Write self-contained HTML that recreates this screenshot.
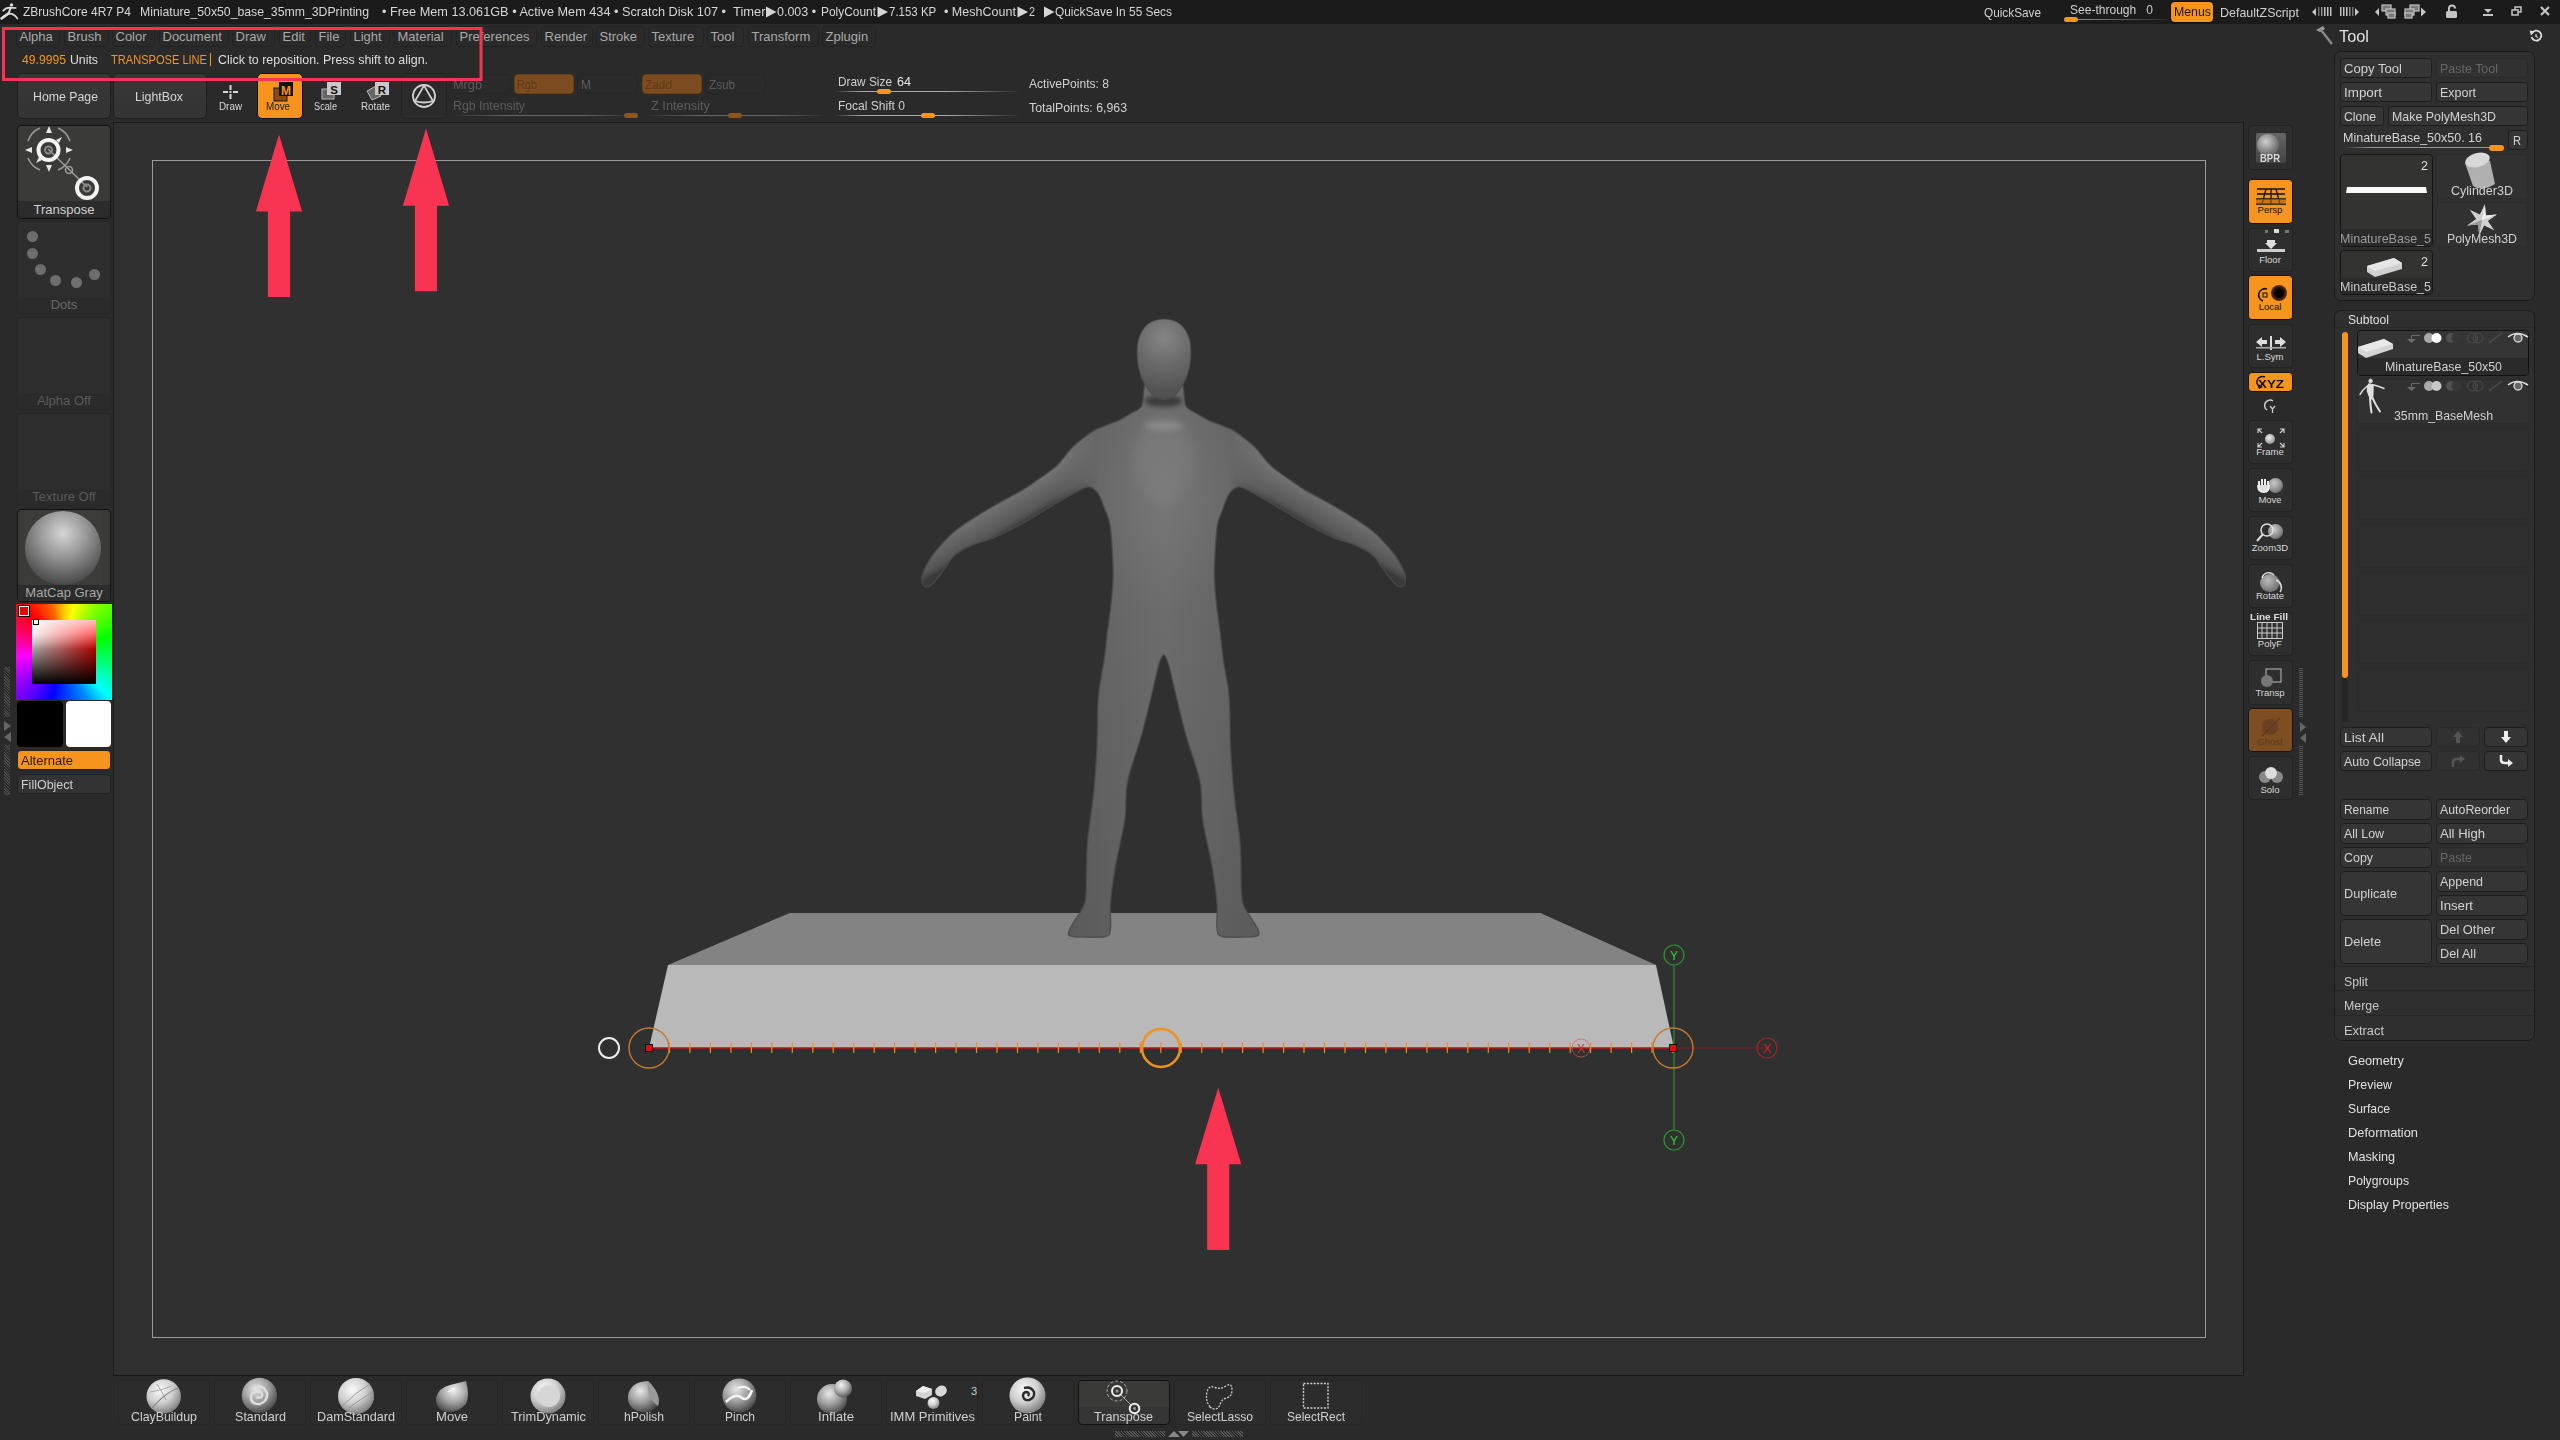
<!DOCTYPE html>
<html><head><meta charset="utf-8"><style>
html,body{margin:0;padding:0;}
body{width:2560px;height:1440px;overflow:hidden;position:relative;background:#2a2a2a;font-family:"Liberation Sans", sans-serif;}
.t{position:absolute;white-space:nowrap;line-height:1;}
</style></head><body>

<div style="position:absolute;left:0px;top:0px;width:2560px;height:24px;background:#1b1b1b;"></div>
<svg style="position:absolute;left:0;top:0" width="20" height="22" viewBox="0 0 20 22"><g fill="none" stroke="#dcdcdc" stroke-linecap="round"><path d="M3.2,10.6 Q6,7.6 9,7.6 L15.8,8" stroke-width="1.6"/><path d="M10.5,8 L8.6,13.4" stroke-width="2"/><path d="M8.6,13.4 L1.6,18.4" stroke-width="2.6"/><path d="M8.6,13.6 Q14,13.2 17.4,18.6" stroke-width="1.7"/></g><circle cx="11.5" cy="4.9" r="1.7" fill="#dcdcdc"/></svg>
<div class="t" style="left:23px;top:4.99px;font-size:13px;color:#d6d6d6;transform:scaleX(0.9226);transform-origin:0 0;">ZBrushCore 4R7 P4</div>
<div class="t" style="left:140px;top:4.99px;font-size:13px;color:#d6d6d6;transform:scaleX(0.9431);transform-origin:0 0;">Miniature_50x50_base_35mm_3DPrinting</div>
<div class="t" style="left:382px;top:4.99px;font-size:13px;color:#d6d6d6;transform:scaleX(0.9772);transform-origin:0 0;">&bull; Free Mem 13.061GB &bull; Active Mem 434 &bull; Scratch Disk 107 &bull;</div>
<div class="t" style="left:732.5px;top:4.99px;font-size:13px;color:#d6d6d6;transform:scaleX(0.9928);transform-origin:0 0;">Timer</div>
<div class="t" style="left:777px;top:4.99px;font-size:13px;color:#d6d6d6;transform:scaleX(0.9583);transform-origin:0 0;">0.003 &bull;</div>
<div class="t" style="left:821px;top:4.99px;font-size:13px;color:#d6d6d6;transform:scaleX(0.9170);transform-origin:0 0;">PolyCount</div>
<div class="t" style="left:888.75px;top:4.99px;font-size:13px;color:#d6d6d6;transform:scaleX(0.8834);transform-origin:0 0;">7.153 KP</div>
<div class="t" style="left:944px;top:4.99px;font-size:13px;color:#d6d6d6;transform:scaleX(0.9646);transform-origin:0 0;">&bull; MeshCount</div>
<div class="t" style="left:1029px;top:4.99px;font-size:13px;color:#d6d6d6;transform:scaleX(0.8298);transform-origin:0 0;">2</div>
<div class="t" style="left:1054.5px;top:4.99px;font-size:13px;color:#d6d6d6;transform:scaleX(0.9148);transform-origin:0 0;">QuickSave In 55 Secs</div>
<svg style="position:absolute;left:760px;top:0" width="300" height="24" viewBox="760 0 300 24"><g fill="#d6d6d6"><polygon points="766,6.5 776.5,12 766,17.5"/><polygon points="877.5,6.5 888,12 877.5,17.5"/><polygon points="1017.5,6.5 1028,12 1017.5,17.5"/><polygon points="1044,6.5 1054.5,12 1044,17.5"/></g></svg>
<div class="t" style="left:1984px;top:5.99px;font-size:13px;color:#d0d0d0;transform:scaleX(0.9067);transform-origin:0 0;">QuickSave</div>
<div class="t" style="left:2070px;top:2.99px;font-size:13px;color:#d0d0d0;transform:scaleX(0.9261);transform-origin:0 0;">See-through&nbsp;&nbsp; 0</div>
<div style="position:absolute;left:2065px;top:19px;width:103px;height:1px;background:linear-gradient(90deg,#999,#2a2a2a);"></div>
<div style="position:absolute;left:2064px;top:17px;width:14px;height:5px;background:#f7941e;border-radius:3px;"></div>
<div style="position:absolute;left:2171px;top:2px;width:42px;height:20px;background:#f7941e;border-radius:4px;box-shadow:0 0 0 1px #111;"></div>
<div class="t" style="left:2174px;top:5.49px;font-size:13px;color:#1a1a1a;transform:scaleX(0.9482);transform-origin:0 0;">Menus</div>
<div class="t" style="left:2219.5px;top:5.99px;font-size:13px;color:#d0d0d0;transform:scaleX(0.9592);transform-origin:0 0;">DefaultZScript</div>
<svg style="position:absolute;left:2300px;top:0px" width="260" height="24" viewBox="0 0 260 24">
<g fill="#c4c4c4">
<polygon points="12,12 16,8 16,16"/>
<rect x="18" y="7" width="1.5" height="9" opacity="0.5"/><rect x="21" y="7" width="1.5" height="9" opacity="0.7"/><rect x="24" y="7" width="1.5" height="9"/><rect x="27" y="7" width="1.5" height="9"/><rect x="30" y="7" width="1.5" height="9"/>
<rect x="40" y="7" width="1.5" height="9"/><rect x="43" y="7" width="1.5" height="9"/><rect x="46" y="7" width="1.5" height="9"/><rect x="49" y="7" width="1.5" height="9" opacity="0.7"/><rect x="52" y="7" width="1.5" height="9" opacity="0.5"/>
<polygon points="59,12 55,8 55,16"/>
<polygon points="75,12 79,8 79,16"/>
<polygon points="126,12 121,7.5 121,16.5"/>
</g>
<g fill="#777" stroke="#c4c4c4" stroke-width="1.2">
<rect x="82" y="5" width="9" height="6"/><rect x="86" y="9" width="9" height="6"/><rect x="88" y="13" width="7" height="5"/>
<rect x="110" y="5" width="9" height="6"/><rect x="105" y="9" width="9" height="6"/><rect x="105" y="13" width="7" height="5"/>
</g>
<g fill="#c4c4c4">
<rect x="146" y="11" width="11" height="7" rx="1.5"/>
</g>
<path d="M149,11 V8.5 a3,3 0 0 1 6,0" stroke="#c4c4c4" stroke-width="2" fill="none"/>
<g fill="#c4c4c4"><polygon points="184,9 192,9 188,13"/><rect x="183" y="14" width="10" height="2"/></g>
<g fill="none" stroke="#c4c4c4" stroke-width="1.5"><rect x="212" y="10" width="6" height="5"/><path d="M215,10 V7 H221 V12 H218"/></g>
<path d="M241,7 L249,15 M249,7 L241,15" stroke="#c4c4c4" stroke-width="2.2"/>
</svg>
<div style="position:absolute;left:16px;top:26px;width:44px;height:21px;box-sizing:border-box;border:1px solid #232323;border-radius:4px;background:#2a2a2a;"></div>
<div class="t" style="left:19.5px;top:29.99px;font-size:13px;color:#a9a9a9;">Alpha</div>
<div style="position:absolute;left:64px;top:26px;width:45px;height:21px;box-sizing:border-box;border:1px solid #232323;border-radius:4px;background:#2a2a2a;"></div>
<div class="t" style="left:67.5px;top:29.99px;font-size:13px;color:#a9a9a9;">Brush</div>
<div style="position:absolute;left:112px;top:26px;width:43px;height:21px;box-sizing:border-box;border:1px solid #232323;border-radius:4px;background:#2a2a2a;"></div>
<div class="t" style="left:115.5px;top:29.99px;font-size:13px;color:#a9a9a9;">Color</div>
<div style="position:absolute;left:159px;top:26px;width:70px;height:21px;box-sizing:border-box;border:1px solid #232323;border-radius:4px;background:#2a2a2a;"></div>
<div class="t" style="left:162.5px;top:29.99px;font-size:13px;color:#a9a9a9;">Document</div>
<div style="position:absolute;left:232px;top:26px;width:43px;height:21px;box-sizing:border-box;border:1px solid #232323;border-radius:4px;background:#2a2a2a;"></div>
<div class="t" style="left:235.5px;top:29.99px;font-size:13px;color:#a9a9a9;">Draw</div>
<div style="position:absolute;left:279px;top:26px;width:32px;height:21px;box-sizing:border-box;border:1px solid #232323;border-radius:4px;background:#2a2a2a;"></div>
<div class="t" style="left:282.5px;top:29.99px;font-size:13px;color:#a9a9a9;">Edit</div>
<div style="position:absolute;left:315px;top:26px;width:31px;height:21px;box-sizing:border-box;border:1px solid #232323;border-radius:4px;background:#2a2a2a;"></div>
<div class="t" style="left:318.5px;top:29.99px;font-size:13px;color:#a9a9a9;">File</div>
<div style="position:absolute;left:350px;top:26px;width:40px;height:21px;box-sizing:border-box;border:1px solid #232323;border-radius:4px;background:#2a2a2a;"></div>
<div class="t" style="left:353.5px;top:29.99px;font-size:13px;color:#a9a9a9;">Light</div>
<div style="position:absolute;left:394px;top:26px;width:58px;height:21px;box-sizing:border-box;border:1px solid #232323;border-radius:4px;background:#2a2a2a;"></div>
<div class="t" style="left:397.5px;top:29.99px;font-size:13px;color:#a9a9a9;">Material</div>
<div style="position:absolute;left:456px;top:26px;width:81px;height:21px;box-sizing:border-box;border:1px solid #232323;border-radius:4px;background:#2a2a2a;"></div>
<div class="t" style="left:459.5px;top:29.99px;font-size:13px;color:#a9a9a9;">Preferences</div>
<div style="position:absolute;left:541px;top:26px;width:52px;height:21px;box-sizing:border-box;border:1px solid #232323;border-radius:4px;background:#2a2a2a;"></div>
<div class="t" style="left:544.5px;top:29.99px;font-size:13px;color:#a9a9a9;">Render</div>
<div style="position:absolute;left:596px;top:26px;width:49px;height:21px;box-sizing:border-box;border:1px solid #232323;border-radius:4px;background:#2a2a2a;"></div>
<div class="t" style="left:599.5px;top:29.99px;font-size:13px;color:#a9a9a9;">Stroke</div>
<div style="position:absolute;left:648px;top:26px;width:56px;height:21px;box-sizing:border-box;border:1px solid #232323;border-radius:4px;background:#2a2a2a;"></div>
<div class="t" style="left:651.5px;top:29.99px;font-size:13px;color:#a9a9a9;">Texture</div>
<div style="position:absolute;left:707px;top:26px;width:37px;height:21px;box-sizing:border-box;border:1px solid #232323;border-radius:4px;background:#2a2a2a;"></div>
<div class="t" style="left:710.5px;top:29.99px;font-size:13px;color:#a9a9a9;">Tool</div>
<div style="position:absolute;left:748px;top:26px;width:71px;height:21px;box-sizing:border-box;border:1px solid #232323;border-radius:4px;background:#2a2a2a;"></div>
<div class="t" style="left:751.5px;top:29.99px;font-size:13px;color:#a9a9a9;">Transform</div>
<div style="position:absolute;left:822px;top:26px;width:54px;height:21px;box-sizing:border-box;border:1px solid #232323;border-radius:4px;background:#2a2a2a;"></div>
<div class="t" style="left:825.5px;top:29.99px;font-size:13px;color:#a9a9a9;">Zplugin</div>
<div class="t" style="left:22px;top:53.49px;font-size:13px;color:#f7941e;transform:scaleX(0.9363);transform-origin:0 0;">49.9995</div>
<div class="t" style="left:70px;top:53.49px;font-size:13px;color:#dedede;transform:scaleX(0.9453);transform-origin:0 0;">Units</div>
<div class="t" style="left:111px;top:53.49px;font-size:13px;color:#f7941e;transform:scaleX(0.8518);transform-origin:0 0;">TRANSPOSE LINE</div>
<div style="position:absolute;left:210px;top:53px;width:1px;height:13px;background:#f7941e;"></div>
<div class="t" style="left:218px;top:53.49px;font-size:13px;color:#dedede;transform:scaleX(0.9561);transform-origin:0 0;">Click to reposition. Press shift to align.</div>
<div style="position:absolute;left:17px;top:73px;width:94px;height:46px;box-sizing:border-box;background:linear-gradient(#383838,#333);border:1px solid #1f1f1f;border-radius:5px;"></div>
<div class="t" style="left:33px;top:89.99px;font-size:13px;color:#d6d6d6;transform:scaleX(0.9468);transform-origin:0 0;">Home Page</div>
<div style="position:absolute;left:113px;top:73px;width:94px;height:46px;box-sizing:border-box;background:linear-gradient(#383838,#333);border:1px solid #1f1f1f;border-radius:5px;"></div>
<div class="t" style="left:135px;top:89.99px;font-size:13px;color:#d6d6d6;transform:scaleX(0.9488);transform-origin:0 0;">LightBox</div>
<div style="position:absolute;left:257px;top:73px;width:46px;height:46px;box-sizing:border-box;background:#f7941e;border:1px solid #111;border-radius:5px;"></div>
<div style="position:absolute;left:401px;top:73px;width:46px;height:46px;box-sizing:border-box;background:#2a2a2a;border:1px solid #222;border-radius:5px;"></div>
<svg style="position:absolute;left:210px;top:75px" width="240" height="45" viewBox="210 75 240 45">
<g fill="#d8d8d8">
<rect x="229.5" y="85" width="2" height="5"/><rect x="229.5" y="94" width="2" height="5"/>
<rect x="223" y="91" width="5" height="2"/><rect x="233" y="91" width="5" height="2"/><rect x="229.5" y="91" width="2" height="2"/>
</g>
<rect x="274" y="88" width="13" height="13" fill="#8a4a10" stroke="#1a1a1a" stroke-width="1"/>
<rect x="279" y="82" width="14" height="14" fill="#111"/>
<text x="286" y="94.5" font-family="Liberation Sans" font-weight="bold" font-size="12" fill="#f7941e" text-anchor="middle">M</text>
<rect x="322" y="89" width="12" height="10" fill="#666" stroke="#bbb" stroke-width="1"/>
<rect x="327" y="82" width="14" height="13" fill="#c8c8c8"/>
<text x="334" y="93.5" font-family="Liberation Sans" font-weight="bold" font-size="11.5" fill="#111" text-anchor="middle">S</text>
<polygon points="367,91 376,86 381,96 372,100" fill="#666" stroke="#bbb" stroke-width="1"/>
<rect x="375" y="82" width="14" height="13" fill="#c8c8c8"/>
<text x="382" y="93.5" font-family="Liberation Sans" font-weight="bold" font-size="11.5" fill="#111" text-anchor="middle">R</text>
<g fill="none" stroke="#cfcfcf" stroke-width="1.8">
<circle cx="424" cy="96" r="11"/>
<path d="M415,101 Q424,86 424,85 Q424,86 433,101 Q424,104 415,101 Z"/>
</g>
</svg>
<div class="t" style="left:219.0px;top:101.53px;font-size:10px;color:#d8d8d8;transform:scaleX(0.9856);transform-origin:0 0;">Draw</div>
<div class="t" style="left:266.0px;top:101.53px;font-size:10px;color:#1a1a1a;transform:scaleX(0.9814);transform-origin:0 0;">Move</div>
<div class="t" style="left:313.5px;top:101.53px;font-size:10px;color:#d8d8d8;transform:scaleX(0.9194);transform-origin:0 0;">Scale</div>
<div class="t" style="left:361.0px;top:101.53px;font-size:10px;color:#d8d8d8;transform:scaleX(0.9843);transform-origin:0 0;">Rotate</div>
<div style="position:absolute;left:450px;top:74px;width:61px;height:20px;box-sizing:border-box;background:#2a2a2a;border:1px solid #262626;border-radius:4px;"></div>
<div class="t" style="left:453px;top:77.99px;font-size:13px;color:#5c5c5c;transform:scaleX(0.9791);transform-origin:0 0;">Mrgb</div>
<div style="position:absolute;left:514px;top:74px;width:60px;height:20px;box-sizing:border-box;background:#7b4c1f;border:1px solid #6a3f15;border-radius:4px;"></div>
<div class="t" style="left:517px;top:77.99px;font-size:13px;color:#5f3a14;transform:scaleX(0.8386);transform-origin:0 0;">Rgb</div>
<div style="position:absolute;left:577px;top:74px;width:61px;height:20px;box-sizing:border-box;background:#2a2a2a;border:1px solid #262626;border-radius:4px;"></div>
<div class="t" style="left:581px;top:77.99px;font-size:13px;color:#5c5c5c;transform:scaleX(0.9234);transform-origin:0 0;">M</div>
<div style="position:absolute;left:642px;top:74px;width:60px;height:20px;box-sizing:border-box;background:#7b4c1f;border:1px solid #6a3f15;border-radius:4px;"></div>
<div class="t" style="left:645px;top:77.99px;font-size:13px;color:#5f3a14;transform:scaleX(0.9112);transform-origin:0 0;">Zadd</div>
<div style="position:absolute;left:705px;top:74px;width:61px;height:20px;box-sizing:border-box;background:#2a2a2a;border:1px solid #262626;border-radius:4px;"></div>
<div class="t" style="left:709px;top:77.99px;font-size:13px;color:#5c5c5c;transform:scaleX(0.8996);transform-origin:0 0;">Zsub</div>
<div class="t" style="left:453px;top:98.99px;font-size:13px;color:#5c5c5c;transform:scaleX(0.9489);transform-origin:0 0;">Rgb Intensity</div>
<div class="t" style="left:651px;top:98.99px;font-size:13px;color:#5c5c5c;transform:scaleX(0.9839);transform-origin:0 0;">Z Intensity</div>
<div style="position:absolute;left:450px;top:115px;width:190px;height:1px;background:linear-gradient(90deg,#2a2a2a,#666 30%,#666 70%,#2a2a2a);"></div>
<div style="position:absolute;left:624px;top:112.5px;width:14px;height:5px;background:#8a5520;border-radius:3px;"></div>
<div style="position:absolute;left:644px;top:115px;width:186px;height:1px;background:linear-gradient(90deg,#2a2a2a,#666 30%,#666 70%,#2a2a2a);"></div>
<div style="position:absolute;left:728px;top:112.5px;width:14px;height:5px;background:#8a5520;border-radius:3px;"></div>
<div class="t" style="left:837.5px;top:75.49px;font-size:13px;color:#cfcfcf;transform:scaleX(0.9116);transform-origin:0 0;">Draw Size</div>
<div class="t" style="left:897px;top:75.49px;font-size:13px;color:#e6e6e6;transform:scaleX(0.9682);transform-origin:0 0;">64</div>
<div style="position:absolute;left:835px;top:91px;width:186px;height:1px;background:linear-gradient(90deg,#2a2a2a,#aaa 15%,#aaa 60%,#2a2a2a);"></div>
<div style="position:absolute;left:877px;top:88.5px;width:14px;height:5.5px;background:#f7941e;border-radius:3px;"></div>
<div class="t" style="left:837.5px;top:98.99px;font-size:13px;color:#cfcfcf;transform:scaleX(0.9273);transform-origin:0 0;">Focal Shift 0</div>
<div style="position:absolute;left:835px;top:115px;width:186px;height:1px;background:linear-gradient(90deg,#2a2a2a,#aaa 15%,#aaa 60%,#2a2a2a);"></div>
<div style="position:absolute;left:921px;top:112.5px;width:14px;height:5.5px;background:#f7941e;border-radius:3px;"></div>
<div class="t" style="left:1029px;top:77.49px;font-size:13px;color:#d0d0d0;transform:scaleX(0.9304);transform-origin:0 0;">ActivePoints: 8</div>
<div class="t" style="left:1029px;top:101.49px;font-size:13px;color:#d0d0d0;transform:scaleX(0.9483);transform-origin:0 0;">TotalPoints: 6,963</div>
<div style="position:absolute;left:113px;top:122px;width:2131px;height:1254px;box-sizing:border-box;background:#303030;border-top:1px solid #1a1a1a;border-right:1px solid #161616;border-bottom:1px solid #161616;border-left:1px solid #1e1e1e;"></div>
<div style="position:absolute;left:152px;top:160px;width:2054px;height:1178px;box-sizing:border-box;border:1px solid #9a9a9a;"></div>
<div style="position:absolute;left:17px;top:125px;width:94px;height:94px;box-sizing:border-box;background:#3a3a38;border:1px solid #111;border-radius:4px;overflow:hidden;"></div>
<div style="position:absolute;left:18px;top:201px;width:92px;height:17px;background:#2c2c2c;border-radius:0 0 3px 3px;"></div>
<div class="t" style="left:33.530234375px;top:202.99px;font-size:13px;color:#d0d0d0;">Transpose</div>
<div style="position:absolute;left:17px;top:221px;width:94px;height:93px;box-sizing:border-box;background:#2e2e2e;border:1px solid #262626;border-radius:4px;overflow:hidden;"></div>
<div style="position:absolute;left:18px;top:297px;width:92px;height:16px;background:#2b2b2b;border-radius:0 0 3px 3px;"></div>
<div class="t" style="left:50.6348828125px;top:297.99px;font-size:13px;color:#6a6a6a;">Dots</div>
<div style="position:absolute;left:17px;top:317px;width:94px;height:93px;box-sizing:border-box;background:#2e2e2e;border:1px solid #262626;border-radius:4px;overflow:hidden;"></div>
<div style="position:absolute;left:18px;top:393px;width:92px;height:16px;background:#2b2b2b;border-radius:0 0 3px 3px;"></div>
<div class="t" style="left:37.01890625px;top:393.99px;font-size:13px;color:#5a5a5a;">Alpha Off</div>
<div style="position:absolute;left:17px;top:413px;width:94px;height:93px;box-sizing:border-box;background:#2e2e2e;border:1px solid #262626;border-radius:4px;overflow:hidden;"></div>
<div style="position:absolute;left:18px;top:489px;width:92px;height:16px;background:#2b2b2b;border-radius:0 0 3px 3px;"></div>
<div class="t" style="left:32.328242187499995px;top:489.99px;font-size:13px;color:#5a5a5a;">Texture Off</div>
<div style="position:absolute;left:17px;top:509px;width:94px;height:93px;box-sizing:border-box;background:#393938;border:1px solid #111;border-radius:4px;overflow:hidden;"></div>
<div style="position:absolute;left:18px;top:585px;width:92px;height:16px;background:#2c2c2c;border-radius:0 0 3px 3px;"></div>
<div class="t" style="left:25.348359375px;top:585.99px;font-size:13px;color:#a8a8a8;">MatCap Gray</div>
<svg style="position:absolute;left:17px;top:125px" width="94" height="76" viewBox="17 125 94 76">
<g fill="none" stroke="#9a9a9a" stroke-width="1.6">
<path d="M28,141 A22,22 0 0 1 40,128"/><path d="M58,128 A22,22 0 0 1 70,141"/>
<path d="M28,158 A22,22 0 0 0 40,170"/><path d="M58,170 A22,22 0 0 0 70,158"/>
<path d="M48,149 L87,187"/>
<circle cx="69" cy="170" r="3.5"/>
</g>
<g fill="#e6e6e6"><polygon points="49,126 46,133 52,133"/><polygon points="49,172 46,165 52,165"/><polygon points="25,150 32,147 32,153"/><polygon points="73,150 66,147 66,153"/>
<polygon points="62,137 56,140 59,143"/><polygon points="36,163 39,157 42,160"/></g>
<circle cx="48.5" cy="150" r="10" fill="none" stroke="#f4f4f4" stroke-width="4"/>
<circle cx="48.5" cy="150" r="3.5" fill="none" stroke="#888" stroke-width="2"/>
<circle cx="87" cy="188" r="10" fill="none" stroke="#f4f4f4" stroke-width="4"/>
<circle cx="87" cy="188" r="3.5" fill="none" stroke="#888" stroke-width="2"/>
</svg>
<div style="position:absolute;left:26.5px;top:230.5px;width:11px;height:11px;background:#6e6e6e;border-radius:50%;"></div>
<div style="position:absolute;left:26.5px;top:247.5px;width:11px;height:11px;background:#6e6e6e;border-radius:50%;"></div>
<div style="position:absolute;left:34.5px;top:263.5px;width:11px;height:11px;background:#6e6e6e;border-radius:50%;"></div>
<div style="position:absolute;left:49.5px;top:274.5px;width:11px;height:11px;background:#6e6e6e;border-radius:50%;"></div>
<div style="position:absolute;left:70.5px;top:276.5px;width:11px;height:11px;background:#6e6e6e;border-radius:50%;"></div>
<div style="position:absolute;left:88.5px;top:268.5px;width:11px;height:11px;background:#6e6e6e;border-radius:50%;"></div>
<div style="position:absolute;left:24px;top:510px;width:79px;height:75px;background:#3c3c3a;"></div>
<div style="position:absolute;left:25px;top:511px;width:76px;height:74px;border-radius:50%;background:radial-gradient(circle at 50% 30%,#d6d6d6 0%,#9a9a9a 35%,#5a5a5a 70%,#2a2a2a 100%);"></div>
<div style="position:absolute;left:16px;top:604px;width:96px;height:96px;background:conic-gradient(from 0deg,#fc0 0deg,#ff0 12deg,#8f0 35deg,#0f0 70deg,#0f8 110deg,#0ff 135deg,#08f 155deg,#00f 195deg,#60f 220deg,#a0f 240deg,#f0f 265deg,#f06 295deg,#f00 320deg,#f60 345deg,#fc0 360deg);"></div>
<div style="position:absolute;left:32px;top:620px;width:64px;height:64px;background:linear-gradient(to bottom,rgba(255,255,255,0.75) 0%,rgba(255,255,255,0) 45%),linear-gradient(to bottom,rgba(0,0,0,0) 20%,#000 100%),linear-gradient(to right,#eee,#f00);"></div>
<div style="position:absolute;left:19px;top:606px;width:10px;height:10px;box-sizing:border-box;background:#e00;border:1.5px solid #fff;outline:1px solid #000;"></div>
<div style="position:absolute;left:33px;top:619px;width:6px;height:6px;box-sizing:border-box;background:#fff;border:1px solid #000;"></div>
<div style="position:absolute;left:17px;top:701px;width:46px;height:46px;background:#000;border-radius:4px;"></div>
<div style="position:absolute;left:66px;top:701px;width:45px;height:46px;background:#fff;border-radius:4px;"></div>
<div style="position:absolute;left:17px;top:750px;width:94px;height:20px;box-sizing:border-box;background:#f7941e;border:1px solid #222;border-radius:4px;"></div>
<div class="t" style="left:21px;top:753.99px;font-size:13px;color:#1a1a1a;transform:scaleX(0.9994);transform-origin:0 0;">Alternate</div>
<div style="position:absolute;left:17px;top:774px;width:94px;height:20px;box-sizing:border-box;background:#333;border:1px solid #222;border-radius:4px;"></div>
<div class="t" style="left:21px;top:777.99px;font-size:13px;color:#d0d0d0;transform:scaleX(0.9598);transform-origin:0 0;">FillObject</div>
<div style="position:absolute;left:4px;top:667px;width:6px;height:50px;background:repeating-linear-gradient(45deg,#4a4a4a 0 1px,#2a2a2a 1px 2px);"></div>
<div style="position:absolute;left:4px;top:745px;width:6px;height:50px;background:repeating-linear-gradient(45deg,#4a4a4a 0 1px,#2a2a2a 1px 2px);"></div>
<svg style="position:absolute;left:3px;top:720px" width="10" height="24"><polygon points="1,1 8,6 1,11" fill="#666"/><polygon points="8,12 1,17 8,22" fill="#666"/></svg>
<svg style="position:absolute;left:0;top:0" width="2560" height="1440" viewBox="0 0 2560 1440">
<defs>
<linearGradient id="topf" x1="0" y1="0" x2="0" y2="1"><stop offset="0" stop-color="#7c7c7c"/><stop offset="1" stop-color="#888"/></linearGradient>
<linearGradient id="frontf" x1="0" y1="0" x2="0" y2="1"><stop offset="0" stop-color="#bdbdbd"/><stop offset="1" stop-color="#b6b6b6"/></linearGradient>
<radialGradient id="body" cx="1163" cy="500" r="440" gradientUnits="userSpaceOnUse"><stop offset="0" stop-color="#777"/><stop offset="0.25" stop-color="#6c6c6c"/><stop offset="1" stop-color="#646464"/></radialGradient>
<linearGradient id="bodyh" x1="1040" y1="0" x2="1290" y2="0" gradientUnits="userSpaceOnUse"><stop offset="0" stop-color="#000" stop-opacity="0.25"/><stop offset="0.5" stop-color="#000" stop-opacity="0"/><stop offset="1" stop-color="#000" stop-opacity="0.25"/></linearGradient>
<radialGradient id="head" cx="1164" cy="338" r="60" gradientUnits="userSpaceOnUse"><stop offset="0" stop-color="#868686"/><stop offset="0.45" stop-color="#6a6a6a"/><stop offset="1" stop-color="#4e4e4e"/></radialGradient>
<filter id="blur6" x="-50%" y="-50%" width="200%" height="200%"><feGaussianBlur stdDeviation="6"/></filter>
<filter id="blur3" x="-50%" y="-50%" width="200%" height="200%"><feGaussianBlur stdDeviation="2.5"/></filter>
<clipPath id="bodyclip"><path d="M1163.8,378.0 C1161.0,378.0 1150.5,374.7 1147.0,378.0 C1143.5,381.3 1144.0,393.2 1143.0,398.0 C1142.0,402.8 1143.2,404.3 1141.0,407.0 C1138.8,409.7 1133.7,411.8 1130.0,414.0 C1126.3,416.2 1122.1,418.8 1118.8,420.4 C1115.4,422.0 1114.0,422.1 1110.0,423.8 C1106.0,425.4 1099.6,427.5 1095.0,430.0 C1090.4,432.5 1086.5,435.6 1082.5,438.8 C1078.5,441.9 1075.2,444.4 1071.0,448.8 C1066.8,453.1 1062.5,460.2 1057.5,465.0 C1052.5,469.8 1046.8,473.3 1041.0,477.5 C1035.2,481.7 1029.8,485.6 1022.5,490.0 C1015.2,494.4 1005.8,499.0 997.5,503.8 C989.2,508.5 979.6,514.2 972.5,518.8 C965.4,523.3 960.2,526.6 955.0,531.0 C949.8,535.4 945.0,540.6 941.0,545.0 C937.0,549.4 933.9,553.2 931.0,557.5 C928.1,561.8 925.2,567.1 923.8,571.0 C922.2,574.9 921.6,578.3 922.0,581.0 C922.4,583.7 924.2,586.5 926.0,587.0 C927.8,587.5 929.5,586.6 932.5,583.8 C935.5,580.9 940.2,574.6 943.8,570.0 C947.3,565.4 949.4,560.0 953.8,556.0 C958.1,552.0 963.8,548.9 970.0,546.0 C976.2,543.1 984.3,541.4 991.0,538.8 C997.7,536.1 1002.7,533.8 1010.0,530.0 C1017.3,526.2 1026.7,520.8 1035.0,516.0 C1043.3,511.2 1052.1,505.5 1060.0,501.0 C1067.9,496.5 1077.3,491.0 1082.5,488.8 C1087.7,486.5 1088.2,486.5 1091.0,487.5 C1093.8,488.5 1096.7,491.2 1099.0,495.0 C1101.3,498.8 1103.2,505.0 1105.0,510.0 C1106.8,515.0 1108.8,517.5 1110.0,525.0 C1111.2,532.5 1112.0,545.8 1112.5,555.0 C1113.0,564.2 1113.3,571.6 1113.0,580.0 C1112.7,588.4 1111.8,596.4 1110.8,605.6 C1109.8,614.8 1108.1,625.8 1107.0,635.0 C1105.9,644.2 1105.5,650.7 1104.0,661.0 C1102.5,671.3 1099.5,682.8 1098.3,697.0 C1097.1,711.2 1097.8,729.8 1097.0,746.0 C1096.2,762.2 1095.1,777.8 1093.5,794.0 C1091.9,810.2 1088.7,826.8 1087.4,843.0 C1086.2,859.2 1086.6,881.0 1086.0,891.5 C1085.4,902.0 1086.1,900.3 1083.7,906.0 C1081.3,911.7 1074.0,920.8 1071.6,925.6 C1069.1,930.4 1067.6,933.1 1069.0,935.0 C1070.4,936.9 1073.9,936.8 1080.0,937.0 C1086.1,937.2 1100.5,938.0 1105.6,936.5 C1110.7,935.0 1109.7,933.5 1110.5,928.0 C1111.3,922.5 1109.7,913.9 1110.5,903.7 C1111.3,893.5 1112.9,881.2 1115.3,867.0 C1117.7,852.8 1123.0,832.9 1125.0,818.7 C1127.0,804.5 1124.7,796.2 1127.5,782.0 C1130.3,767.8 1137.6,749.8 1142.0,733.6 C1146.4,717.4 1151.2,696.6 1154.0,685.0 C1156.8,673.4 1157.4,669.0 1159.0,664.0 C1160.6,659.0 1162.2,655.0 1163.8,655.0 C1165.3,655.0 1166.9,659.0 1168.5,664.0 C1170.1,669.0 1170.7,673.4 1173.5,685.0 C1176.3,696.6 1181.1,717.4 1185.5,733.6 C1189.9,749.8 1197.2,767.8 1200.0,782.0 C1202.8,796.2 1200.5,804.5 1202.5,818.7 C1204.5,832.9 1209.8,852.8 1212.2,867.0 C1214.6,881.2 1216.2,893.5 1217.0,903.7 C1217.8,913.9 1216.2,922.5 1217.0,928.0 C1217.8,933.5 1216.8,935.0 1221.9,936.5 C1227.0,938.0 1241.4,937.2 1247.5,937.0 C1253.6,936.8 1257.1,936.9 1258.5,935.0 C1259.9,933.1 1258.4,930.4 1255.9,925.6 C1253.5,920.8 1246.2,911.7 1243.8,906.0 C1241.4,900.3 1242.1,902.0 1241.5,891.5 C1240.9,881.0 1241.3,859.2 1240.1,843.0 C1238.8,826.8 1235.6,810.2 1234.0,794.0 C1232.4,777.8 1231.3,762.2 1230.5,746.0 C1229.7,729.8 1230.4,711.2 1229.2,697.0 C1228.0,682.8 1225.0,671.3 1223.5,661.0 C1222.0,650.7 1221.6,644.2 1220.5,635.0 C1219.4,625.8 1217.7,614.8 1216.7,605.6 C1215.7,596.4 1214.8,588.4 1214.5,580.0 C1214.2,571.6 1214.5,564.2 1215.0,555.0 C1215.5,545.8 1216.2,532.5 1217.5,525.0 C1218.8,517.5 1220.7,515.0 1222.5,510.0 C1224.3,505.0 1226.2,498.8 1228.5,495.0 C1230.8,491.2 1233.8,488.5 1236.5,487.5 C1239.2,486.5 1239.8,486.5 1245.0,488.8 C1250.2,491.0 1259.6,496.5 1267.5,501.0 C1275.4,505.5 1284.2,511.2 1292.5,516.0 C1300.8,520.8 1310.2,526.2 1317.5,530.0 C1324.8,533.8 1329.8,536.1 1336.5,538.8 C1343.2,541.4 1351.3,543.1 1357.5,546.0 C1363.7,548.9 1369.4,552.0 1373.8,556.0 C1378.1,560.0 1380.2,565.4 1383.8,570.0 C1387.3,574.6 1392.0,580.9 1395.0,583.8 C1398.0,586.6 1399.8,587.5 1401.5,587.0 C1403.2,586.5 1405.1,583.7 1405.5,581.0 C1405.9,578.3 1405.2,574.9 1403.8,571.0 C1402.2,567.1 1399.4,561.8 1396.5,557.5 C1393.6,553.2 1390.5,549.4 1386.5,545.0 C1382.5,540.6 1377.8,535.4 1372.5,531.0 C1367.2,526.6 1362.1,523.3 1355.0,518.8 C1347.9,514.2 1338.3,508.5 1330.0,503.8 C1321.7,499.0 1312.2,494.4 1305.0,490.0 C1297.8,485.6 1292.3,481.7 1286.5,477.5 C1280.7,473.3 1275.0,469.8 1270.0,465.0 C1265.0,460.2 1260.7,453.1 1256.5,448.8 C1252.3,444.4 1249.0,441.9 1245.0,438.8 C1241.0,435.6 1237.1,432.5 1232.5,430.0 C1227.9,427.5 1221.5,425.4 1217.5,423.8 C1213.5,422.1 1212.1,422.0 1208.8,420.4 C1205.4,418.8 1201.2,416.2 1197.5,414.0 C1193.8,411.8 1188.7,409.7 1186.5,407.0 C1184.3,404.3 1185.5,402.8 1184.5,398.0 C1183.5,393.2 1184.0,381.3 1180.5,378.0 C1177.0,374.7 1166.5,378.0 1163.8,378.0 C1161.0,378.0 1166.5,378.0 1163.8,378.0 Z"/></clipPath>
<linearGradient id="fadeL" x1="1050" y1="0" x2="1098" y2="0" gradientUnits="userSpaceOnUse"><stop offset="0" stop-color="#fff"/><stop offset="1" stop-color="#000"/></linearGradient>
<linearGradient id="fadeR" x1="1277.5" y1="0" x2="1229.5" y2="0" gradientUnits="userSpaceOnUse"><stop offset="0" stop-color="#fff"/><stop offset="1" stop-color="#000"/></linearGradient>
<mask id="mL" maskUnits="userSpaceOnUse" x="880" y="400" width="240" height="220"><rect x="880" y="400" width="240" height="220" fill="url(#fadeL)"/></mask>
<mask id="mR" maskUnits="userSpaceOnUse" x="1207.5" y="400" width="240" height="220"><rect x="1207.5" y="400" width="240" height="220" fill="url(#fadeR)"/></mask>
<linearGradient id="armL" x1="1000" y1="500" x2="1016" y2="527" gradientUnits="userSpaceOnUse"><stop offset="0" stop-color="#8a8a8a" stop-opacity="0.55"/><stop offset="0.45" stop-color="#777" stop-opacity="0.25"/><stop offset="0.75" stop-color="#444" stop-opacity="0.2"/><stop offset="1" stop-color="#2a2a2a" stop-opacity="0.7"/></linearGradient>
<linearGradient id="armR" x1="1327.5" y1="500" x2="1311.5" y2="527" gradientUnits="userSpaceOnUse"><stop offset="0" stop-color="#8a8a8a" stop-opacity="0.55"/><stop offset="0.45" stop-color="#777" stop-opacity="0.25"/><stop offset="0.75" stop-color="#444" stop-opacity="0.2"/><stop offset="1" stop-color="#2a2a2a" stop-opacity="0.7"/></linearGradient>
</defs>
<polygon points="789.7,913 1540.4,913 1656,965 668,965" fill="#838383"/>
<polygon points="668,965 1656,965 1674,1048 649,1048" fill="#b9b9b9"/>
<path d="M1163.8,378.0 C1161.0,378.0 1150.5,374.7 1147.0,378.0 C1143.5,381.3 1144.0,393.2 1143.0,398.0 C1142.0,402.8 1143.2,404.3 1141.0,407.0 C1138.8,409.7 1133.7,411.8 1130.0,414.0 C1126.3,416.2 1122.1,418.8 1118.8,420.4 C1115.4,422.0 1114.0,422.1 1110.0,423.8 C1106.0,425.4 1099.6,427.5 1095.0,430.0 C1090.4,432.5 1086.5,435.6 1082.5,438.8 C1078.5,441.9 1075.2,444.4 1071.0,448.8 C1066.8,453.1 1062.5,460.2 1057.5,465.0 C1052.5,469.8 1046.8,473.3 1041.0,477.5 C1035.2,481.7 1029.8,485.6 1022.5,490.0 C1015.2,494.4 1005.8,499.0 997.5,503.8 C989.2,508.5 979.6,514.2 972.5,518.8 C965.4,523.3 960.2,526.6 955.0,531.0 C949.8,535.4 945.0,540.6 941.0,545.0 C937.0,549.4 933.9,553.2 931.0,557.5 C928.1,561.8 925.2,567.1 923.8,571.0 C922.2,574.9 921.6,578.3 922.0,581.0 C922.4,583.7 924.2,586.5 926.0,587.0 C927.8,587.5 929.5,586.6 932.5,583.8 C935.5,580.9 940.2,574.6 943.8,570.0 C947.3,565.4 949.4,560.0 953.8,556.0 C958.1,552.0 963.8,548.9 970.0,546.0 C976.2,543.1 984.3,541.4 991.0,538.8 C997.7,536.1 1002.7,533.8 1010.0,530.0 C1017.3,526.2 1026.7,520.8 1035.0,516.0 C1043.3,511.2 1052.1,505.5 1060.0,501.0 C1067.9,496.5 1077.3,491.0 1082.5,488.8 C1087.7,486.5 1088.2,486.5 1091.0,487.5 C1093.8,488.5 1096.7,491.2 1099.0,495.0 C1101.3,498.8 1103.2,505.0 1105.0,510.0 C1106.8,515.0 1108.8,517.5 1110.0,525.0 C1111.2,532.5 1112.0,545.8 1112.5,555.0 C1113.0,564.2 1113.3,571.6 1113.0,580.0 C1112.7,588.4 1111.8,596.4 1110.8,605.6 C1109.8,614.8 1108.1,625.8 1107.0,635.0 C1105.9,644.2 1105.5,650.7 1104.0,661.0 C1102.5,671.3 1099.5,682.8 1098.3,697.0 C1097.1,711.2 1097.8,729.8 1097.0,746.0 C1096.2,762.2 1095.1,777.8 1093.5,794.0 C1091.9,810.2 1088.7,826.8 1087.4,843.0 C1086.2,859.2 1086.6,881.0 1086.0,891.5 C1085.4,902.0 1086.1,900.3 1083.7,906.0 C1081.3,911.7 1074.0,920.8 1071.6,925.6 C1069.1,930.4 1067.6,933.1 1069.0,935.0 C1070.4,936.9 1073.9,936.8 1080.0,937.0 C1086.1,937.2 1100.5,938.0 1105.6,936.5 C1110.7,935.0 1109.7,933.5 1110.5,928.0 C1111.3,922.5 1109.7,913.9 1110.5,903.7 C1111.3,893.5 1112.9,881.2 1115.3,867.0 C1117.7,852.8 1123.0,832.9 1125.0,818.7 C1127.0,804.5 1124.7,796.2 1127.5,782.0 C1130.3,767.8 1137.6,749.8 1142.0,733.6 C1146.4,717.4 1151.2,696.6 1154.0,685.0 C1156.8,673.4 1157.4,669.0 1159.0,664.0 C1160.6,659.0 1162.2,655.0 1163.8,655.0 C1165.3,655.0 1166.9,659.0 1168.5,664.0 C1170.1,669.0 1170.7,673.4 1173.5,685.0 C1176.3,696.6 1181.1,717.4 1185.5,733.6 C1189.9,749.8 1197.2,767.8 1200.0,782.0 C1202.8,796.2 1200.5,804.5 1202.5,818.7 C1204.5,832.9 1209.8,852.8 1212.2,867.0 C1214.6,881.2 1216.2,893.5 1217.0,903.7 C1217.8,913.9 1216.2,922.5 1217.0,928.0 C1217.8,933.5 1216.8,935.0 1221.9,936.5 C1227.0,938.0 1241.4,937.2 1247.5,937.0 C1253.6,936.8 1257.1,936.9 1258.5,935.0 C1259.9,933.1 1258.4,930.4 1255.9,925.6 C1253.5,920.8 1246.2,911.7 1243.8,906.0 C1241.4,900.3 1242.1,902.0 1241.5,891.5 C1240.9,881.0 1241.3,859.2 1240.1,843.0 C1238.8,826.8 1235.6,810.2 1234.0,794.0 C1232.4,777.8 1231.3,762.2 1230.5,746.0 C1229.7,729.8 1230.4,711.2 1229.2,697.0 C1228.0,682.8 1225.0,671.3 1223.5,661.0 C1222.0,650.7 1221.6,644.2 1220.5,635.0 C1219.4,625.8 1217.7,614.8 1216.7,605.6 C1215.7,596.4 1214.8,588.4 1214.5,580.0 C1214.2,571.6 1214.5,564.2 1215.0,555.0 C1215.5,545.8 1216.2,532.5 1217.5,525.0 C1218.8,517.5 1220.7,515.0 1222.5,510.0 C1224.3,505.0 1226.2,498.8 1228.5,495.0 C1230.8,491.2 1233.8,488.5 1236.5,487.5 C1239.2,486.5 1239.8,486.5 1245.0,488.8 C1250.2,491.0 1259.6,496.5 1267.5,501.0 C1275.4,505.5 1284.2,511.2 1292.5,516.0 C1300.8,520.8 1310.2,526.2 1317.5,530.0 C1324.8,533.8 1329.8,536.1 1336.5,538.8 C1343.2,541.4 1351.3,543.1 1357.5,546.0 C1363.7,548.9 1369.4,552.0 1373.8,556.0 C1378.1,560.0 1380.2,565.4 1383.8,570.0 C1387.3,574.6 1392.0,580.9 1395.0,583.8 C1398.0,586.6 1399.8,587.5 1401.5,587.0 C1403.2,586.5 1405.1,583.7 1405.5,581.0 C1405.9,578.3 1405.2,574.9 1403.8,571.0 C1402.2,567.1 1399.4,561.8 1396.5,557.5 C1393.6,553.2 1390.5,549.4 1386.5,545.0 C1382.5,540.6 1377.8,535.4 1372.5,531.0 C1367.2,526.6 1362.1,523.3 1355.0,518.8 C1347.9,514.2 1338.3,508.5 1330.0,503.8 C1321.7,499.0 1312.2,494.4 1305.0,490.0 C1297.8,485.6 1292.3,481.7 1286.5,477.5 C1280.7,473.3 1275.0,469.8 1270.0,465.0 C1265.0,460.2 1260.7,453.1 1256.5,448.8 C1252.3,444.4 1249.0,441.9 1245.0,438.8 C1241.0,435.6 1237.1,432.5 1232.5,430.0 C1227.9,427.5 1221.5,425.4 1217.5,423.8 C1213.5,422.1 1212.1,422.0 1208.8,420.4 C1205.4,418.8 1201.2,416.2 1197.5,414.0 C1193.8,411.8 1188.7,409.7 1186.5,407.0 C1184.3,404.3 1185.5,402.8 1184.5,398.0 C1183.5,393.2 1184.0,381.3 1180.5,378.0 C1177.0,374.7 1166.5,378.0 1163.8,378.0 C1161.0,378.0 1166.5,378.0 1163.8,378.0 Z" fill="url(#body)"/>
<path d="M1163.8,378.0 C1161.0,378.0 1150.5,374.7 1147.0,378.0 C1143.5,381.3 1144.0,393.2 1143.0,398.0 C1142.0,402.8 1143.2,404.3 1141.0,407.0 C1138.8,409.7 1133.7,411.8 1130.0,414.0 C1126.3,416.2 1122.1,418.8 1118.8,420.4 C1115.4,422.0 1114.0,422.1 1110.0,423.8 C1106.0,425.4 1099.6,427.5 1095.0,430.0 C1090.4,432.5 1086.5,435.6 1082.5,438.8 C1078.5,441.9 1075.2,444.4 1071.0,448.8 C1066.8,453.1 1062.5,460.2 1057.5,465.0 C1052.5,469.8 1046.8,473.3 1041.0,477.5 C1035.2,481.7 1029.8,485.6 1022.5,490.0 C1015.2,494.4 1005.8,499.0 997.5,503.8 C989.2,508.5 979.6,514.2 972.5,518.8 C965.4,523.3 960.2,526.6 955.0,531.0 C949.8,535.4 945.0,540.6 941.0,545.0 C937.0,549.4 933.9,553.2 931.0,557.5 C928.1,561.8 925.2,567.1 923.8,571.0 C922.2,574.9 921.6,578.3 922.0,581.0 C922.4,583.7 924.2,586.5 926.0,587.0 C927.8,587.5 929.5,586.6 932.5,583.8 C935.5,580.9 940.2,574.6 943.8,570.0 C947.3,565.4 949.4,560.0 953.8,556.0 C958.1,552.0 963.8,548.9 970.0,546.0 C976.2,543.1 984.3,541.4 991.0,538.8 C997.7,536.1 1002.7,533.8 1010.0,530.0 C1017.3,526.2 1026.7,520.8 1035.0,516.0 C1043.3,511.2 1052.1,505.5 1060.0,501.0 C1067.9,496.5 1077.3,491.0 1082.5,488.8 C1087.7,486.5 1088.2,486.5 1091.0,487.5 C1093.8,488.5 1096.7,491.2 1099.0,495.0 C1101.3,498.8 1103.2,505.0 1105.0,510.0 C1106.8,515.0 1108.8,517.5 1110.0,525.0 C1111.2,532.5 1112.0,545.8 1112.5,555.0 C1113.0,564.2 1113.3,571.6 1113.0,580.0 C1112.7,588.4 1111.8,596.4 1110.8,605.6 C1109.8,614.8 1108.1,625.8 1107.0,635.0 C1105.9,644.2 1105.5,650.7 1104.0,661.0 C1102.5,671.3 1099.5,682.8 1098.3,697.0 C1097.1,711.2 1097.8,729.8 1097.0,746.0 C1096.2,762.2 1095.1,777.8 1093.5,794.0 C1091.9,810.2 1088.7,826.8 1087.4,843.0 C1086.2,859.2 1086.6,881.0 1086.0,891.5 C1085.4,902.0 1086.1,900.3 1083.7,906.0 C1081.3,911.7 1074.0,920.8 1071.6,925.6 C1069.1,930.4 1067.6,933.1 1069.0,935.0 C1070.4,936.9 1073.9,936.8 1080.0,937.0 C1086.1,937.2 1100.5,938.0 1105.6,936.5 C1110.7,935.0 1109.7,933.5 1110.5,928.0 C1111.3,922.5 1109.7,913.9 1110.5,903.7 C1111.3,893.5 1112.9,881.2 1115.3,867.0 C1117.7,852.8 1123.0,832.9 1125.0,818.7 C1127.0,804.5 1124.7,796.2 1127.5,782.0 C1130.3,767.8 1137.6,749.8 1142.0,733.6 C1146.4,717.4 1151.2,696.6 1154.0,685.0 C1156.8,673.4 1157.4,669.0 1159.0,664.0 C1160.6,659.0 1162.2,655.0 1163.8,655.0 C1165.3,655.0 1166.9,659.0 1168.5,664.0 C1170.1,669.0 1170.7,673.4 1173.5,685.0 C1176.3,696.6 1181.1,717.4 1185.5,733.6 C1189.9,749.8 1197.2,767.8 1200.0,782.0 C1202.8,796.2 1200.5,804.5 1202.5,818.7 C1204.5,832.9 1209.8,852.8 1212.2,867.0 C1214.6,881.2 1216.2,893.5 1217.0,903.7 C1217.8,913.9 1216.2,922.5 1217.0,928.0 C1217.8,933.5 1216.8,935.0 1221.9,936.5 C1227.0,938.0 1241.4,937.2 1247.5,937.0 C1253.6,936.8 1257.1,936.9 1258.5,935.0 C1259.9,933.1 1258.4,930.4 1255.9,925.6 C1253.5,920.8 1246.2,911.7 1243.8,906.0 C1241.4,900.3 1242.1,902.0 1241.5,891.5 C1240.9,881.0 1241.3,859.2 1240.1,843.0 C1238.8,826.8 1235.6,810.2 1234.0,794.0 C1232.4,777.8 1231.3,762.2 1230.5,746.0 C1229.7,729.8 1230.4,711.2 1229.2,697.0 C1228.0,682.8 1225.0,671.3 1223.5,661.0 C1222.0,650.7 1221.6,644.2 1220.5,635.0 C1219.4,625.8 1217.7,614.8 1216.7,605.6 C1215.7,596.4 1214.8,588.4 1214.5,580.0 C1214.2,571.6 1214.5,564.2 1215.0,555.0 C1215.5,545.8 1216.2,532.5 1217.5,525.0 C1218.8,517.5 1220.7,515.0 1222.5,510.0 C1224.3,505.0 1226.2,498.8 1228.5,495.0 C1230.8,491.2 1233.8,488.5 1236.5,487.5 C1239.2,486.5 1239.8,486.5 1245.0,488.8 C1250.2,491.0 1259.6,496.5 1267.5,501.0 C1275.4,505.5 1284.2,511.2 1292.5,516.0 C1300.8,520.8 1310.2,526.2 1317.5,530.0 C1324.8,533.8 1329.8,536.1 1336.5,538.8 C1343.2,541.4 1351.3,543.1 1357.5,546.0 C1363.7,548.9 1369.4,552.0 1373.8,556.0 C1378.1,560.0 1380.2,565.4 1383.8,570.0 C1387.3,574.6 1392.0,580.9 1395.0,583.8 C1398.0,586.6 1399.8,587.5 1401.5,587.0 C1403.2,586.5 1405.1,583.7 1405.5,581.0 C1405.9,578.3 1405.2,574.9 1403.8,571.0 C1402.2,567.1 1399.4,561.8 1396.5,557.5 C1393.6,553.2 1390.5,549.4 1386.5,545.0 C1382.5,540.6 1377.8,535.4 1372.5,531.0 C1367.2,526.6 1362.1,523.3 1355.0,518.8 C1347.9,514.2 1338.3,508.5 1330.0,503.8 C1321.7,499.0 1312.2,494.4 1305.0,490.0 C1297.8,485.6 1292.3,481.7 1286.5,477.5 C1280.7,473.3 1275.0,469.8 1270.0,465.0 C1265.0,460.2 1260.7,453.1 1256.5,448.8 C1252.3,444.4 1249.0,441.9 1245.0,438.8 C1241.0,435.6 1237.1,432.5 1232.5,430.0 C1227.9,427.5 1221.5,425.4 1217.5,423.8 C1213.5,422.1 1212.1,422.0 1208.8,420.4 C1205.4,418.8 1201.2,416.2 1197.5,414.0 C1193.8,411.8 1188.7,409.7 1186.5,407.0 C1184.3,404.3 1185.5,402.8 1184.5,398.0 C1183.5,393.2 1184.0,381.3 1180.5,378.0 C1177.0,374.7 1166.5,378.0 1163.8,378.0 C1161.0,378.0 1166.5,378.0 1163.8,378.0 Z" fill="url(#bodyh)" opacity="0.5"/>
<ellipse cx="1163.5" cy="460" rx="30" ry="42" fill="#858585" opacity="0.4" filter="url(#blur6)"/>
<ellipse cx="1163.5" cy="426" rx="20" ry="5" fill="#999" opacity="0.5" filter="url(#blur3)"/>
<g clip-path="url(#bodyclip)"><rect x="880" y="400" width="240" height="220" fill="url(#armL)" mask="url(#mL)"/><rect x="1207.5" y="400" width="240" height="220" fill="url(#armR)" mask="url(#mR)"/></g>
<path d="M1163.8,378.0 C1161.0,378.0 1150.5,374.7 1147.0,378.0 C1143.5,381.3 1144.0,393.2 1143.0,398.0 C1142.0,402.8 1143.2,404.3 1141.0,407.0 C1138.8,409.7 1133.7,411.8 1130.0,414.0 C1126.3,416.2 1122.1,418.8 1118.8,420.4 C1115.4,422.0 1114.0,422.1 1110.0,423.8 C1106.0,425.4 1099.6,427.5 1095.0,430.0 C1090.4,432.5 1086.5,435.6 1082.5,438.8 C1078.5,441.9 1075.2,444.4 1071.0,448.8 C1066.8,453.1 1062.5,460.2 1057.5,465.0 C1052.5,469.8 1046.8,473.3 1041.0,477.5 C1035.2,481.7 1029.8,485.6 1022.5,490.0 C1015.2,494.4 1005.8,499.0 997.5,503.8 C989.2,508.5 979.6,514.2 972.5,518.8 C965.4,523.3 960.2,526.6 955.0,531.0 C949.8,535.4 945.0,540.6 941.0,545.0 C937.0,549.4 933.9,553.2 931.0,557.5 C928.1,561.8 925.2,567.1 923.8,571.0 C922.2,574.9 921.6,578.3 922.0,581.0 C922.4,583.7 924.2,586.5 926.0,587.0 C927.8,587.5 929.5,586.6 932.5,583.8 C935.5,580.9 940.2,574.6 943.8,570.0 C947.3,565.4 949.4,560.0 953.8,556.0 C958.1,552.0 963.8,548.9 970.0,546.0 C976.2,543.1 984.3,541.4 991.0,538.8 C997.7,536.1 1002.7,533.8 1010.0,530.0 C1017.3,526.2 1026.7,520.8 1035.0,516.0 C1043.3,511.2 1052.1,505.5 1060.0,501.0 C1067.9,496.5 1077.3,491.0 1082.5,488.8 C1087.7,486.5 1088.2,486.5 1091.0,487.5 C1093.8,488.5 1096.7,491.2 1099.0,495.0 C1101.3,498.8 1103.2,505.0 1105.0,510.0 C1106.8,515.0 1108.8,517.5 1110.0,525.0 C1111.2,532.5 1112.0,545.8 1112.5,555.0 C1113.0,564.2 1113.3,571.6 1113.0,580.0 C1112.7,588.4 1111.8,596.4 1110.8,605.6 C1109.8,614.8 1108.1,625.8 1107.0,635.0 C1105.9,644.2 1105.5,650.7 1104.0,661.0 C1102.5,671.3 1099.5,682.8 1098.3,697.0 C1097.1,711.2 1097.8,729.8 1097.0,746.0 C1096.2,762.2 1095.1,777.8 1093.5,794.0 C1091.9,810.2 1088.7,826.8 1087.4,843.0 C1086.2,859.2 1086.6,881.0 1086.0,891.5 C1085.4,902.0 1086.1,900.3 1083.7,906.0 C1081.3,911.7 1074.0,920.8 1071.6,925.6 C1069.1,930.4 1067.6,933.1 1069.0,935.0 C1070.4,936.9 1073.9,936.8 1080.0,937.0 C1086.1,937.2 1100.5,938.0 1105.6,936.5 C1110.7,935.0 1109.7,933.5 1110.5,928.0 C1111.3,922.5 1109.7,913.9 1110.5,903.7 C1111.3,893.5 1112.9,881.2 1115.3,867.0 C1117.7,852.8 1123.0,832.9 1125.0,818.7 C1127.0,804.5 1124.7,796.2 1127.5,782.0 C1130.3,767.8 1137.6,749.8 1142.0,733.6 C1146.4,717.4 1151.2,696.6 1154.0,685.0 C1156.8,673.4 1157.4,669.0 1159.0,664.0 C1160.6,659.0 1162.2,655.0 1163.8,655.0 C1165.3,655.0 1166.9,659.0 1168.5,664.0 C1170.1,669.0 1170.7,673.4 1173.5,685.0 C1176.3,696.6 1181.1,717.4 1185.5,733.6 C1189.9,749.8 1197.2,767.8 1200.0,782.0 C1202.8,796.2 1200.5,804.5 1202.5,818.7 C1204.5,832.9 1209.8,852.8 1212.2,867.0 C1214.6,881.2 1216.2,893.5 1217.0,903.7 C1217.8,913.9 1216.2,922.5 1217.0,928.0 C1217.8,933.5 1216.8,935.0 1221.9,936.5 C1227.0,938.0 1241.4,937.2 1247.5,937.0 C1253.6,936.8 1257.1,936.9 1258.5,935.0 C1259.9,933.1 1258.4,930.4 1255.9,925.6 C1253.5,920.8 1246.2,911.7 1243.8,906.0 C1241.4,900.3 1242.1,902.0 1241.5,891.5 C1240.9,881.0 1241.3,859.2 1240.1,843.0 C1238.8,826.8 1235.6,810.2 1234.0,794.0 C1232.4,777.8 1231.3,762.2 1230.5,746.0 C1229.7,729.8 1230.4,711.2 1229.2,697.0 C1228.0,682.8 1225.0,671.3 1223.5,661.0 C1222.0,650.7 1221.6,644.2 1220.5,635.0 C1219.4,625.8 1217.7,614.8 1216.7,605.6 C1215.7,596.4 1214.8,588.4 1214.5,580.0 C1214.2,571.6 1214.5,564.2 1215.0,555.0 C1215.5,545.8 1216.2,532.5 1217.5,525.0 C1218.8,517.5 1220.7,515.0 1222.5,510.0 C1224.3,505.0 1226.2,498.8 1228.5,495.0 C1230.8,491.2 1233.8,488.5 1236.5,487.5 C1239.2,486.5 1239.8,486.5 1245.0,488.8 C1250.2,491.0 1259.6,496.5 1267.5,501.0 C1275.4,505.5 1284.2,511.2 1292.5,516.0 C1300.8,520.8 1310.2,526.2 1317.5,530.0 C1324.8,533.8 1329.8,536.1 1336.5,538.8 C1343.2,541.4 1351.3,543.1 1357.5,546.0 C1363.7,548.9 1369.4,552.0 1373.8,556.0 C1378.1,560.0 1380.2,565.4 1383.8,570.0 C1387.3,574.6 1392.0,580.9 1395.0,583.8 C1398.0,586.6 1399.8,587.5 1401.5,587.0 C1403.2,586.5 1405.1,583.7 1405.5,581.0 C1405.9,578.3 1405.2,574.9 1403.8,571.0 C1402.2,567.1 1399.4,561.8 1396.5,557.5 C1393.6,553.2 1390.5,549.4 1386.5,545.0 C1382.5,540.6 1377.8,535.4 1372.5,531.0 C1367.2,526.6 1362.1,523.3 1355.0,518.8 C1347.9,514.2 1338.3,508.5 1330.0,503.8 C1321.7,499.0 1312.2,494.4 1305.0,490.0 C1297.8,485.6 1292.3,481.7 1286.5,477.5 C1280.7,473.3 1275.0,469.8 1270.0,465.0 C1265.0,460.2 1260.7,453.1 1256.5,448.8 C1252.3,444.4 1249.0,441.9 1245.0,438.8 C1241.0,435.6 1237.1,432.5 1232.5,430.0 C1227.9,427.5 1221.5,425.4 1217.5,423.8 C1213.5,422.1 1212.1,422.0 1208.8,420.4 C1205.4,418.8 1201.2,416.2 1197.5,414.0 C1193.8,411.8 1188.7,409.7 1186.5,407.0 C1184.3,404.3 1185.5,402.8 1184.5,398.0 C1183.5,393.2 1184.0,381.3 1180.5,378.0 C1177.0,374.7 1166.5,378.0 1163.8,378.0 C1161.0,378.0 1166.5,378.0 1163.8,378.0 Z" fill="none" stroke="#4a4a4a" stroke-width="1.5" opacity="0.8"/>
<ellipse cx="1163.5" cy="401" rx="19" ry="6" fill="#2e2e2e" opacity="0.8" filter="url(#blur3)"/>
<path d="M1164,319 C1182,319 1191,333 1191,352 C1191,375 1180,398 1164,400 C1148,398 1137,375 1137,352 C1137,333 1146,319 1164,319 Z" fill="url(#head)"/>
<path d="M1164,319 C1182,319 1191,333 1191,352 C1191,375 1180,398 1164,400 C1148,398 1137,375 1137,352 C1137,333 1146,319 1164,319 Z" fill="none" stroke="#4a4a4a" stroke-width="1.2" opacity="0.7"/>
<!-- transpose line -->
<line x1="1673" y1="1048" x2="1767" y2="1048" stroke="#6a2222" stroke-width="1.5"/>
<line x1="1674" y1="955" x2="1674" y2="1140" stroke="#2c8c2c" stroke-width="1.2"/>
<line x1="649" y1="1048" x2="1673" y2="1048" stroke="#c01212" stroke-width="1.6"/>
<path d="M669.5,1042.5 V1053 M689.9,1042.5 V1053 M710.4,1042.5 V1053 M730.9,1042.5 V1053 M751.4,1042.5 V1053 M771.8,1042.5 V1053 M792.3,1042.5 V1053 M812.8,1042.5 V1053 M833.2,1042.5 V1053 M853.7,1042.5 V1053 M874.2,1042.5 V1053 M894.6,1042.5 V1053 M915.1,1042.5 V1053 M935.6,1042.5 V1053 M956.1,1042.5 V1053 M976.5,1042.5 V1053 M997.0,1042.5 V1053 M1017.5,1042.5 V1053 M1037.9,1042.5 V1053 M1058.4,1042.5 V1053 M1078.9,1042.5 V1053 M1099.3,1042.5 V1053 M1119.8,1042.5 V1053 M1140.3,1042.5 V1053 M1160.8,1042.5 V1053 M1181.2,1042.5 V1053 M1201.7,1042.5 V1053 M1222.2,1042.5 V1053 M1242.6,1042.5 V1053 M1263.1,1042.5 V1053 M1283.6,1042.5 V1053 M1304.0,1042.5 V1053 M1324.5,1042.5 V1053 M1345.0,1042.5 V1053 M1365.5,1042.5 V1053 M1385.9,1042.5 V1053 M1406.4,1042.5 V1053 M1426.9,1042.5 V1053 M1447.3,1042.5 V1053 M1467.8,1042.5 V1053 M1488.3,1042.5 V1053 M1508.7,1042.5 V1053 M1529.2,1042.5 V1053 M1549.7,1042.5 V1053 M1570.2,1042.5 V1053 M1590.6,1042.5 V1053 M1611.1,1042.5 V1053 M1631.6,1042.5 V1053 M1652.0,1042.5 V1053 M1672.5,1042.5 V1053 " stroke="#f08a22" stroke-width="1.2"/>
<circle cx="649" cy="1048" r="20" fill="none" stroke="#c47a30" stroke-width="1.4"/>
<circle cx="1673" cy="1048" r="20" fill="none" stroke="#c47a30" stroke-width="1.4"/>
<circle cx="1161" cy="1048" r="19" fill="none" stroke="#f0901e" stroke-width="2.6"/>
<circle cx="609" cy="1048" r="10" fill="none" stroke="#ececec" stroke-width="2"/>
<rect x="645.5" y="1044.5" width="7" height="7" fill="#e01010" stroke="#111" stroke-width="1"/>
<rect x="1669.5" y="1044.5" width="7" height="7" fill="#e01010" stroke="#111" stroke-width="1"/>
<circle cx="1581" cy="1048" r="9" fill="none" stroke="#c86060" stroke-width="1" opacity="0.7"/>
<text x="1581" y="1052.5" font-family="Liberation Sans" font-size="12" fill="#d03030" text-anchor="middle">X</text>
<circle cx="1767" cy="1048" r="10" fill="none" stroke="#9a2a2a" stroke-width="1.2"/>
<text x="1767" y="1052.5" font-family="Liberation Sans" font-size="12" fill="#d02020" text-anchor="middle">X</text>
<circle cx="1674" cy="955" r="10" fill="#303030" stroke="#2a9a2a" stroke-width="1.2"/>
<text x="1674" y="959.5" font-family="Liberation Sans" font-size="12" fill="#30d030" text-anchor="middle">Y</text>
<circle cx="1674" cy="1140" r="10" fill="#303030" stroke="#2a9a2a" stroke-width="1.2"/>
<text x="1674" y="1144.5" font-family="Liberation Sans" font-size="12" fill="#30d030" text-anchor="middle">Y</text>
<!-- red box -->
<rect x="3.5" y="28.5" width="477.5" height="51" fill="none" stroke="#f83452" stroke-width="3"/>
<!-- arrows -->
<polygon points="279,134.5 302.1,211.5 290.1,211.5 290.1,297 267.9,297 267.9,211.5 255.9,211.5" fill="#f83452"/>
<polygon points="426,128.6 449.1,205.8 437.05,205.8 437.05,291.2 414.95,291.2 414.95,205.8 402.9,205.8" fill="#f83452"/>
<polygon points="1218.2,1087.8 1241.3,1164.3 1229.25,1164.3 1229.25,1250 1207.15,1250 1207.15,1164.3 1195.1000000000001,1164.3" fill="#f83452"/>
</svg>
<div style="position:absolute;left:2248px;top:125px;width:45px;height:45px;box-sizing:border-box;background:#2e2e2e;border:1px solid #222;border-radius:4px;"></div>
<div style="position:absolute;left:2256px;top:133px;width:30px;height:30px;background:linear-gradient(#666,#444);border-radius:2px;"></div>
<div style="position:absolute;left:2257px;top:134px;width:22px;height:22px;border-radius:50%;background:radial-gradient(circle at 40% 35%,#cfcfcf,#777 60%,#555);"></div>
<div class="t" style="left:2260.0px;top:153.53px;font-size:10px;color:#d8d8d8;transform:scaleX(0.9472);transform-origin:0 0;font-weight:bold;">BPR</div>
<div style="position:absolute;left:2248px;top:179px;width:45px;height:45px;box-sizing:border-box;background:#f7941e;border:1px solid #151515;border-radius:4px;"></div>
<div class="t" style="left:2257.59099609375px;top:204.96px;font-size:9.5px;color:#111;">Persp</div>
<svg style="position:absolute;left:2256px;top:186px" width="30" height="20" viewBox="0 0 30 20"><g fill="none" stroke="#111" stroke-width="1.3"><path d="M1,3 H29 M1,8 H29 M0,13 H30 M0,18 H30 M10,3 L6,18 M20,3 L24,18 M15,3 V18"/></g><rect x="0" y="13" width="30" height="5" fill="#b06010" opacity="0.6"/></svg>
<div style="position:absolute;left:2248px;top:228px;width:45px;height:44px;box-sizing:border-box;background:#2e2e2e;border:1px solid #222;border-radius:4px;"></div>
<div class="t" style="left:2259.177421875px;top:254.96px;font-size:9.5px;color:#d8d8d8;">Floor</div>
<div style="position:absolute;left:2257px;top:249px;width:28px;height:3px;background:#ccc;"></div>
<svg style="position:absolute;left:2264px;top:240px" width="14" height="10"><polygon points="3,0 11,0 11,3 13,3 7,9 1,3 3,3" fill="#ddd"/></svg>
<svg style="position:absolute;left:2265px;top:229px" width="25" height="6"><g fill="#777"><rect x="0" y="1" width="3" height="3"/><rect x="20" y="1" width="4" height="3"/></g><rect x="9" y="0" width="5" height="4" fill="#ddd"/></svg>
<div style="position:absolute;left:2248px;top:275px;width:45px;height:45px;box-sizing:border-box;background:#f7941e;border:1px solid #151515;border-radius:4px;"></div>
<div class="t" style="left:2258.64416015625px;top:301.96px;font-size:9.5px;color:#111;">Local</div>
<div style="position:absolute;left:2271px;top:285px;width:16px;height:16px;border-radius:50%;background:radial-gradient(circle,#000 30%,#603010 70%,rgba(0,0,0,0) 100%);"></div>
<svg style="position:absolute;left:2257px;top:287px" width="14" height="16"><path d="M10,2 A6,6 0 1 0 6,14" stroke="#111" stroke-width="1.6" fill="none"/><rect x="6" y="6" width="4" height="4" fill="none" stroke="#111" stroke-width="1"/></svg>
<div style="position:absolute;left:2248px;top:324px;width:45px;height:44px;box-sizing:border-box;background:#2e2e2e;border:1px solid #222;border-radius:4px;"></div>
<div class="t" style="left:2256.538203125px;top:351.96px;font-size:9.5px;color:#d8d8d8;">L.Sym</div>
<svg style="position:absolute;left:2256px;top:336px" width="30" height="14"><g fill="#ddd"><polygon points="0,6 6,1 6,4 11,4 11,8 6,8 6,11"/><polygon points="30,6 24,1 24,4 19,4 19,8 24,8 24,11"/><rect x="14" y="0" width="2" height="14"/></g><rect x="0" y="11" width="30" height="1.5" fill="#aaa"/></svg>
<div style="position:absolute;left:2248px;top:372px;width:45px;height:20px;box-sizing:border-box;background:#f7941e;border:1px solid #151515;border-radius:4px;"></div>
<div class="t" style="left:2258px;top:378.69px;font-size:11px;color:#111;transform:scaleX(1.2153);transform-origin:0 0;font-weight:bold;">XYZ</div>
<svg style="position:absolute;left:2256px;top:375px" width="12" height="14"><path d="M9,2 A5,5 0 1 0 4,12" stroke="#111" stroke-width="1.5" fill="none"/><polygon points="2,9 7,12 3,14" fill="#111"/></svg>
<svg style="position:absolute;left:2262px;top:398px" width="16" height="16"><path d="M11,3 A5,5 0 1 0 5,12" stroke="#ccc" stroke-width="1.5" fill="none"/><path d="M8,8 L10.5,11 L13,8 M10.5,11 V15" stroke="#ccc" stroke-width="1.3" fill="none"/></svg>
<div style="position:absolute;left:2248px;top:420px;width:45px;height:44px;box-sizing:border-box;background:#2e2e2e;border:1px solid #222;border-radius:4px;"></div>
<div class="t" style="left:2256.27583984375px;top:447.46px;font-size:9.5px;color:#d8d8d8;">Frame</div>
<div style="position:absolute;left:2248px;top:468px;width:45px;height:44px;box-sizing:border-box;background:#2e2e2e;border:1px solid #222;border-radius:4px;"></div>
<div class="t" style="left:2258.38439453125px;top:495.46px;font-size:9.5px;color:#d8d8d8;">Move</div>
<div style="position:absolute;left:2248px;top:516px;width:45px;height:44px;box-sizing:border-box;background:#2e2e2e;border:1px solid #222;border-radius:4px;"></div>
<div class="t" style="left:2251.78560546875px;top:543.46px;font-size:9.5px;color:#d8d8d8;">Zoom3D</div>
<div style="position:absolute;left:2248px;top:564px;width:45px;height:44px;box-sizing:border-box;background:#2e2e2e;border:1px solid #222;border-radius:4px;"></div>
<div class="t" style="left:2256.00494140625px;top:591.46px;font-size:9.5px;color:#d8d8d8;">Rotate</div>
<div style="position:absolute;left:2248px;top:612px;width:45px;height:44px;box-sizing:border-box;background:#2e2e2e;border:1px solid #222;border-radius:4px;"></div>
<div class="t" style="left:2257.8578125px;top:639.46px;font-size:9.5px;color:#d8d8d8;">PolyF</div>
<div style="position:absolute;left:2248px;top:660px;width:45px;height:45px;box-sizing:border-box;background:#2e2e2e;border:1px solid #222;border-radius:4px;"></div>
<div class="t" style="left:2255.392265625px;top:688.46px;font-size:9.5px;color:#d8d8d8;">Transp</div>
<div style="position:absolute;left:2265px;top:434px;width:10px;height:10px;border-radius:50%;background:radial-gradient(circle at 40% 35%,#eee,#777);"></div>
<svg style="position:absolute;left:2257px;top:428px" width="28" height="20"><g stroke="#ccc" stroke-width="1.2" fill="none"><path d="M1,5 V1 H5 M1,1 L5,5 M27,5 V1 H23 M27,1 L23,5 M1,15 V19 H5 M1,19 L5,15 M27,15 V19 H23 M27,19 L23,15"/></g></svg>
<div style="position:absolute;left:2268px;top:478px;width:15px;height:15px;border-radius:50%;background:radial-gradient(circle at 40% 35%,#ccc,#555);"></div>
<svg style="position:absolute;left:2256px;top:477px" width="16" height="16"><path d="M3,8 V4 M6,8 V2 M9,8 V2 M12,8 V4 M2,8 Q2,15 8,15 Q13,15 13,8" stroke="#eee" stroke-width="2" fill="#ddd"/></svg>
<div style="position:absolute;left:2268px;top:524px;width:15px;height:15px;border-radius:50%;background:radial-gradient(circle at 40% 35%,#ccc,#555);"></div>
<svg style="position:absolute;left:2255px;top:522px" width="20" height="22"><circle cx="12" cy="8" r="6" stroke="#ddd" stroke-width="1.5" fill="none"/><path d="M8,12 L2,19" stroke="#ddd" stroke-width="2"/></svg>
<div style="position:absolute;left:2260px;top:574px;width:20px;height:18px;border-radius:50%;background:radial-gradient(circle at 40% 35%,#bbb,#555);"></div>
<svg style="position:absolute;left:2258px;top:570px" width="30" height="26"><path d="M4,8 A7,7 0 0 1 16,5 M18,10 A8,8 0 0 1 22,22" stroke="#ddd" stroke-width="1.5" fill="none"/></svg>
<div class="t" style="left:2250px;top:611.96px;font-size:9.5px;color:#ddd;transform:scaleX(1.0588);transform-origin:0 0;font-weight:bold;">Line Fill</div>
<svg style="position:absolute;left:2257px;top:622px" width="26" height="18"><rect x="0.5" y="0.5" width="25" height="16" fill="#333" stroke="#ccc"/><path d="M0,6 H26 M0,11 H26 M5,0 V17 M10,0 V17 M15,0 V17 M20,0 V17" stroke="#ccc" stroke-width="1"/></svg>
<svg style="position:absolute;left:2258px;top:668px" width="30" height="20"><rect x="8" y="1" width="15" height="13" fill="none" stroke="#bbb" stroke-width="1"/><circle cx="9" cy="13" r="6" fill="#777"/></svg>
<div style="position:absolute;left:2248px;top:708px;width:45px;height:44px;box-sizing:border-box;background:#7d4e22;border:1px solid #151515;border-radius:4px;"></div>
<div class="t" style="left:2257.3271484375px;top:736.96px;font-size:9.5px;color:#5a3a1a;">Ghost</div>
<svg style="position:absolute;left:2258px;top:714px" width="26" height="26"><circle cx="12" cy="13" r="8" fill="#6a4020"/><path d="M4,22 L22,4" stroke="#5a3a1a" stroke-width="1.5"/></svg>
<div style="position:absolute;left:2248px;top:756px;width:45px;height:44px;box-sizing:border-box;background:#2e2e2e;border:1px solid #222;border-radius:4px;"></div>
<div class="t" style="left:2260.492578125px;top:784.96px;font-size:9.5px;color:#d8d8d8;">Solo</div>
<svg style="position:absolute;left:2257px;top:765px" width="28" height="20"><circle cx="8" cy="12" r="6" fill="#888"/><circle cx="20" cy="12" r="6" fill="#888"/><circle cx="14" cy="8" r="6" fill="#ddd"/></svg>
<div style="position:absolute;left:2299px;top:667px;width:4px;height:50px;background:repeating-linear-gradient(0deg,#555 0 1px,#2a2a2a 1px 2px);"></div>
<div style="position:absolute;left:2299px;top:745px;width:4px;height:50px;background:repeating-linear-gradient(0deg,#555 0 1px,#2a2a2a 1px 2px);"></div>
<svg style="position:absolute;left:2298px;top:721px" width="10" height="24"><polygon points="2,1 8,6 2,11" fill="#666"/><polygon points="8,12 2,17 8,22" fill="#666"/></svg>
<svg style="position:absolute;left:2312px;top:24px" width="24" height="24" viewBox="0 0 24 24"><path d="M4,6 L11,2 L13,5 L8,8 Z" fill="#9a9a9a"/><path d="M9,6 L20,20" stroke="#8a8a8a" stroke-width="2.4"/></svg>
<div class="t" style="left:2339px;top:28.95px;font-size:16px;color:#e0e0e0;transform:scaleX(1.0221);transform-origin:0 0;">Tool</div>
<svg style="position:absolute;left:2529px;top:29px" width="14" height="14" viewBox="0 0 14 14"><path d="M3,4 A5,5 0 1 1 2.5,8" stroke="#ddd" stroke-width="1.8" fill="none"/><polygon points="0.5,1.5 5.5,2.5 2,6.5" fill="#ddd"/><path d="M7,5 V7.5 L9,8.5" stroke="#ddd" stroke-width="1.2" fill="none"/></svg>
<div style="position:absolute;left:2334px;top:51px;width:201px;height:250px;box-sizing:border-box;background:#2f2f2f;border:1px solid #1a1a1a;border-radius:7px;"></div>
<div style="position:absolute;left:2340px;top:58px;width:92px;height:20px;box-sizing:border-box;background:#353535;border:1px solid #1e1e1e;border-radius:4px;"></div>
<div class="t" style="left:2344px;top:61.59px;font-size:13px;color:#d2d2d2;transform:scaleX(1.0074);transform-origin:0 0;">Copy Tool</div>
<div style="position:absolute;left:2436px;top:58px;width:92px;height:20px;box-sizing:border-box;background:#313131;border:1px solid #2a2a2a;border-radius:4px;"></div>
<div class="t" style="left:2440px;top:61.59px;font-size:13px;color:#666;transform:scaleX(0.9592);transform-origin:0 0;">Paste Tool</div>
<div style="position:absolute;left:2340px;top:82px;width:92px;height:20px;box-sizing:border-box;background:#353535;border:1px solid #1e1e1e;border-radius:4px;"></div>
<div class="t" style="left:2344px;top:85.59px;font-size:13px;color:#d2d2d2;transform:scaleX(1.0314);transform-origin:0 0;">Import</div>
<div style="position:absolute;left:2436px;top:82px;width:92px;height:20px;box-sizing:border-box;background:#353535;border:1px solid #1e1e1e;border-radius:4px;"></div>
<div class="t" style="left:2440px;top:85.59px;font-size:13px;color:#d2d2d2;transform:scaleX(0.9581);transform-origin:0 0;">Export</div>
<div style="position:absolute;left:2340px;top:106px;width:44px;height:20px;box-sizing:border-box;background:#353535;border:1px solid #1e1e1e;border-radius:4px;"></div>
<div class="t" style="left:2344px;top:109.59px;font-size:13px;color:#d2d2d2;transform:scaleX(0.9421);transform-origin:0 0;">Clone</div>
<div style="position:absolute;left:2388px;top:106px;width:140px;height:20px;box-sizing:border-box;background:#353535;border:1px solid #1e1e1e;border-radius:4px;"></div>
<div class="t" style="left:2392px;top:109.59px;font-size:13px;color:#d2d2d2;transform:scaleX(0.9532);transform-origin:0 0;">Make PolyMesh3D</div>
<div class="t" style="left:2343px;top:130.99px;font-size:13px;color:#d4d4d4;transform:scaleX(0.9616);transform-origin:0 0;">MinatureBase_50x50. 16</div>
<div style="position:absolute;left:2343px;top:147px;width:147px;height:1px;background:linear-gradient(90deg,#2f2f2f,#999 20%,#999);"></div>
<div style="position:absolute;left:2489px;top:145px;width:15px;height:5.5px;background:#f7941e;border-radius:3px;"></div>
<div style="position:absolute;left:2508px;top:130px;width:20px;height:20px;box-sizing:border-box;background:#353535;border:1px solid #1e1e1e;border-radius:4px;"></div>
<div class="t" style="left:2513px;top:133.59px;font-size:13px;color:#d2d2d2;transform:scaleX(0.8521);transform-origin:0 0;">R</div>
<div style="position:absolute;left:2340px;top:154px;width:93px;height:93px;box-sizing:border-box;background:#333332;border:1px solid #151515;border-radius:4px;overflow:hidden;"></div>
<div style="position:absolute;left:2341px;top:229px;width:91px;height:17px;background:#2a2a2a;"></div>
<div class="t" style="left:2340px;top:231.99px;font-size:13px;color:#9a9a9a;transform:scaleX(0.9612);transform-origin:0 0;">MinatureBase_5</div>
<div class="t" style="left:2421px;top:158.99px;font-size:13px;color:#e0e0e0;transform:scaleX(0.9682);transform-origin:0 0;">2</div>
<svg style="position:absolute;left:2346px;top:186px" width="82" height="8"><polygon points="1,1 80,1 81,7 0,7" fill="#fafafa"/></svg>
<div style="position:absolute;left:2436px;top:154px;width:92px;height:45px;box-sizing:border-box;background:#313131;border:1px solid #2c2c2c;border-radius:3px;"></div>
<div style="position:absolute;left:2436px;top:202px;width:92px;height:45px;box-sizing:border-box;background:#313131;border:1px solid #2c2c2c;border-radius:3px;"></div>
<svg style="position:absolute;left:2460px;top:150px" width="45" height="50" viewBox="0 0 45 50"><path d="M5,13 L13,36 Q22,42 35,34 L30,11 Q18,3 5,13 Z" fill="#b0b0b0"/><ellipse cx="17.5" cy="10" rx="12.5" ry="7" transform="rotate(-15 17.5 10)" fill="#d8d8d8"/></svg>
<div class="t" style="left:2451.0px;top:183.99px;font-size:13px;color:#d0d0d0;transform:scaleX(0.9642);transform-origin:0 0;">Cylinder3D</div>
<svg style="position:absolute;left:2464px;top:203px" width="36" height="36" viewBox="0 0 36 36"><polygon points="20.8,1.2 21.9,12.4 33.0,11.5 23.9,18.0 30.3,27.3 20.1,22.6 15.2,32.8 14.1,21.6 3.0,22.5 12.1,16.0 5.7,6.7 15.9,11.4" fill="#cfcfcf"/><polygon points="18,17 20.8,1.2 21.9,12.4 33.0,11.5" fill="#eee"/><polygon points="18,17 15.2,32.8 14.1,21.6 3.0,22.5" fill="#999"/></svg>
<div class="t" style="left:2447.0px;top:231.99px;font-size:13px;color:#d0d0d0;transform:scaleX(0.9498);transform-origin:0 0;">PolyMesh3D</div>
<div style="position:absolute;left:2340px;top:250px;width:93px;height:45px;box-sizing:border-box;background:#333332;border:1px solid #151515;border-radius:4px;overflow:hidden;"></div>
<div style="position:absolute;left:2341px;top:278px;width:91px;height:16px;background:#2a2a2a;"></div>
<div class="t" style="left:2340px;top:279.99px;font-size:13px;color:#c8c8c8;transform:scaleX(0.9612);transform-origin:0 0;">MinatureBase_5</div>
<div class="t" style="left:2421px;top:254.99px;font-size:13px;color:#e0e0e0;transform:scaleX(0.9682);transform-origin:0 0;">2</div>
<svg style="position:absolute;left:2366px;top:254px" width="36" height="24" viewBox="0 0 36 24"><polygon points="1,12 28,4 36,9 36,15 9,23 1,18" fill="#d0d0d0"/><polygon points="1,12 28,4 36,9 9,17" fill="#e6e6e6"/></svg>
<div style="position:absolute;left:2334px;top:310px;width:201px;height:731px;box-sizing:border-box;background:#2f2f2f;border:1px solid #1a1a1a;border-radius:7px;"></div>
<div class="t" style="left:2348px;top:312.99px;font-size:13px;color:#e0e0e0;transform:scaleX(0.9299);transform-origin:0 0;">Subtool</div>
<div style="position:absolute;left:2335px;top:327px;width:199px;height:1px;background:#2a2a2a;"></div>
<div style="position:absolute;left:2342px;top:332px;width:6px;height:390px;background:#262626;border-radius:3px;"></div>
<div style="position:absolute;left:2342px;top:332px;width:6px;height:346px;background:#f7941e;border-radius:3px;"></div>
<div style="position:absolute;left:2357px;top:330px;width:172px;height:46px;box-sizing:border-box;background:#353535;border:1px solid #111;border-radius:4px;overflow:hidden;"></div>
<div style="position:absolute;left:2358px;top:358px;width:170px;height:17px;background:#2a2a2a;"></div>
<div class="t" style="left:2384.5px;top:359.99px;font-size:13px;color:#d0d0d0;transform:scaleX(0.9523);transform-origin:0 0;">MinatureBase_50x50</div>
<svg style="position:absolute;left:2357px;top:335px" width="36" height="24" viewBox="0 0 36 24"><polygon points="1,12 27,4 36,9 36,14 9,23 1,18" fill="#d4d4d4"/><polygon points="1,12 27,4 36,9 9,17" fill="#e8e8e8"/></svg>
<svg style="position:absolute;left:2405px;top:331px" width="125" height="14" viewBox="0 0 125 14">
<path d="M6.5,4.5 H15 M6.5,4.5 V8.5" stroke="#6a6a6a" stroke-width="1.1" fill="none"/><polygon points="2,8 11,8 6.5,12" fill="#6a6a6a"/>
<circle cx="24" cy="7" r="5" fill="#a8a8a8"/><circle cx="31.5" cy="7" r="5" fill="#fff"/>
<circle cx="46" cy="7" r="5" fill="#505050"/><circle cx="51.5" cy="7" r="5" fill="#383838"/>
<circle cx="67.5" cy="7" r="5" fill="none" stroke="#4e4e4e" stroke-width="1"/><circle cx="73" cy="7" r="5" fill="none" stroke="#4e4e4e" stroke-width="1"/><path d="M70,3 A5,5 0 0 1 70,11 Z" fill="#444"/>
<path d="M84,12 L97,2" stroke="#474747" stroke-width="2"/>
<path d="M103,6 Q112,-1 123,6" stroke="#ddd" stroke-width="1.5" fill="none"/><circle cx="113" cy="7" r="4" fill="#666" stroke="#ddd" stroke-width="1.3"/>
</svg>
<div style="position:absolute;left:2357px;top:379px;width:172px;height:45px;box-sizing:border-box;background:#313131;border:1px solid #2c2c2c;border-radius:4px;"></div>
<div class="t" style="left:2393.5px;top:408.99px;font-size:13px;color:#d0d0d0;transform:scaleX(0.9449);transform-origin:0 0;">35mm_BaseMesh</div>
<svg style="position:absolute;left:2405px;top:379px" width="125" height="14" viewBox="0 0 125 14">
<path d="M6.5,4.5 H15 M6.5,4.5 V8.5" stroke="#6a6a6a" stroke-width="1.1" fill="none"/><polygon points="2,8 11,8 6.5,12" fill="#6a6a6a"/>
<circle cx="24" cy="7" r="5" fill="#a8a8a8"/><circle cx="31.5" cy="7" r="5" fill="#c8c8c8"/>
<circle cx="46" cy="7" r="5" fill="#505050"/><circle cx="51.5" cy="7" r="5" fill="#383838"/>
<circle cx="67.5" cy="7" r="5" fill="none" stroke="#4e4e4e" stroke-width="1"/><circle cx="73" cy="7" r="5" fill="none" stroke="#4e4e4e" stroke-width="1"/><path d="M70,3 A5,5 0 0 1 70,11 Z" fill="#444"/>
<path d="M84,12 L97,2" stroke="#474747" stroke-width="2"/>
<path d="M103,6 Q112,-1 123,6" stroke="#ddd" stroke-width="1.5" fill="none"/><circle cx="113" cy="7" r="4" fill="#666" stroke="#ddd" stroke-width="1.3"/>
</svg>
<svg style="position:absolute;left:2358px;top:378px" width="32" height="36" viewBox="0 0 32 36"><g fill="#dedede" stroke="#dedede" stroke-linecap="round" stroke-linejoin="round"><ellipse cx="12.5" cy="3" rx="1.6" ry="2"/><path d="M11,6 Q9,9 9.5,13 L12,20 L14.5,21 Q15,13 15,8 Z" stroke-width="1.5"/><path d="M10.5,7 L5,12 L2,16.5" stroke-width="1.4" fill="none"/><path d="M14,6.5 L21,8.5 L26,10.5" stroke-width="1.4" fill="none"/><path d="M12,19 L12.5,27 L13.5,34.5" stroke-width="2" fill="none"/><path d="M14.5,20 L18,27 L22,33.5" stroke-width="2" fill="none"/></g></svg>
<div style="position:absolute;left:2357px;top:427px;width:172px;height:45px;box-sizing:border-box;background:#2f2f2f;border:1px solid #2b2b2b;border-radius:4px;"></div>
<div style="position:absolute;left:2357px;top:475px;width:172px;height:45px;box-sizing:border-box;background:#2f2f2f;border:1px solid #2b2b2b;border-radius:4px;"></div>
<div style="position:absolute;left:2357px;top:523px;width:172px;height:45px;box-sizing:border-box;background:#2f2f2f;border:1px solid #2b2b2b;border-radius:4px;"></div>
<div style="position:absolute;left:2357px;top:571px;width:172px;height:45px;box-sizing:border-box;background:#2f2f2f;border:1px solid #2b2b2b;border-radius:4px;"></div>
<div style="position:absolute;left:2357px;top:619px;width:172px;height:45px;box-sizing:border-box;background:#2f2f2f;border:1px solid #2b2b2b;border-radius:4px;"></div>
<div style="position:absolute;left:2357px;top:667px;width:172px;height:45px;box-sizing:border-box;background:#2f2f2f;border:1px solid #2b2b2b;border-radius:4px;"></div>
<div style="position:absolute;left:2340px;top:727px;width:92px;height:20px;box-sizing:border-box;background:#353535;border:1px solid #1e1e1e;border-radius:4px;"></div>
<div class="t" style="left:2344px;top:730.59px;font-size:13px;color:#d2d2d2;transform:scaleX(1.0646);transform-origin:0 0;">List All</div>
<div style="position:absolute;left:2436px;top:727px;width:44px;height:20px;box-sizing:border-box;background:#313131;border:1px solid #2a2a2a;border-radius:4px;"></div>
<div style="position:absolute;left:2484px;top:727px;width:44px;height:20px;box-sizing:border-box;background:#353535;border:1px solid #1e1e1e;border-radius:4px;"></div>
<svg style="position:absolute;left:2451px;top:730px" width="14" height="14"><polygon points="7,1 12,7 9,7 9,13 5,13 5,7 2,7" fill="#555"/></svg>
<svg style="position:absolute;left:2499px;top:730px" width="14" height="14"><polygon points="7,13 12,7 9,7 9,1 5,1 5,7 2,7" fill="#eee"/></svg>
<div style="position:absolute;left:2340px;top:751px;width:92px;height:20px;box-sizing:border-box;background:#353535;border:1px solid #1e1e1e;border-radius:4px;"></div>
<div class="t" style="left:2344px;top:754.59px;font-size:13px;color:#d2d2d2;transform:scaleX(0.9513);transform-origin:0 0;">Auto Collapse</div>
<div style="position:absolute;left:2436px;top:751px;width:44px;height:20px;box-sizing:border-box;background:#313131;border:1px solid #2a2a2a;border-radius:4px;"></div>
<div style="position:absolute;left:2484px;top:751px;width:44px;height:20px;box-sizing:border-box;background:#353535;border:1px solid #1e1e1e;border-radius:4px;"></div>
<svg style="position:absolute;left:2450px;top:754px" width="16" height="14"><path d="M3,13 V8 Q3,5 7,5 H10" stroke="#555" stroke-width="2.5" fill="none"/><polygon points="10,1 15,5 10,9" fill="#555"/></svg>
<svg style="position:absolute;left:2498px;top:754px" width="16" height="14"><path d="M3,1 V6 Q3,9 7,9 H10" stroke="#eee" stroke-width="2.5" fill="none"/><polygon points="10,5 15,9 10,13" fill="#eee"/></svg>
<div style="position:absolute;left:2340px;top:799px;width:92px;height:21px;box-sizing:border-box;background:#353535;border:1px solid #1e1e1e;border-radius:4px;"></div>
<div class="t" style="left:2344px;top:803.09px;font-size:13px;color:#d2d2d2;transform:scaleX(0.9158);transform-origin:0 0;">Rename</div>
<div style="position:absolute;left:2436px;top:799px;width:92px;height:21px;box-sizing:border-box;background:#353535;border:1px solid #1e1e1e;border-radius:4px;"></div>
<div class="t" style="left:2440px;top:803.09px;font-size:13px;color:#d2d2d2;transform:scaleX(0.9496);transform-origin:0 0;">AutoReorder</div>
<div style="position:absolute;left:2340px;top:823px;width:92px;height:21px;box-sizing:border-box;background:#353535;border:1px solid #1e1e1e;border-radius:4px;"></div>
<div class="t" style="left:2344px;top:827.09px;font-size:13px;color:#d2d2d2;transform:scaleX(0.9545);transform-origin:0 0;">All Low</div>
<div style="position:absolute;left:2436px;top:823px;width:92px;height:21px;box-sizing:border-box;background:#353535;border:1px solid #1e1e1e;border-radius:4px;"></div>
<div class="t" style="left:2440px;top:827.09px;font-size:13px;color:#d2d2d2;transform:scaleX(1.0045);transform-origin:0 0;">All High</div>
<div style="position:absolute;left:2340px;top:847px;width:92px;height:21px;box-sizing:border-box;background:#353535;border:1px solid #1e1e1e;border-radius:4px;"></div>
<div class="t" style="left:2344px;top:851.09px;font-size:13px;color:#d2d2d2;transform:scaleX(0.9556);transform-origin:0 0;">Copy</div>
<div style="position:absolute;left:2436px;top:847px;width:92px;height:21px;box-sizing:border-box;background:#313131;border:1px solid #2a2a2a;border-radius:4px;"></div>
<div class="t" style="left:2440px;top:851.09px;font-size:13px;color:#666;transform:scaleX(0.9626);transform-origin:0 0;">Paste</div>
<div style="position:absolute;left:2340px;top:871px;width:92px;height:45px;box-sizing:border-box;background:#353535;border:1px solid #1e1e1e;border-radius:4px;"></div>
<div class="t" style="left:2344px;top:887.09px;font-size:13px;color:#d2d2d2;transform:scaleX(0.9779);transform-origin:0 0;">Duplicate</div>
<div style="position:absolute;left:2436px;top:871px;width:92px;height:21px;box-sizing:border-box;background:#353535;border:1px solid #1e1e1e;border-radius:4px;"></div>
<div class="t" style="left:2440px;top:875.09px;font-size:13px;color:#d2d2d2;transform:scaleX(0.9593);transform-origin:0 0;">Append</div>
<div style="position:absolute;left:2436px;top:895px;width:92px;height:21px;box-sizing:border-box;background:#353535;border:1px solid #1e1e1e;border-radius:4px;"></div>
<div class="t" style="left:2440px;top:899.09px;font-size:13px;color:#d2d2d2;transform:scaleX(1.0150);transform-origin:0 0;">Insert</div>
<div style="position:absolute;left:2340px;top:919px;width:92px;height:45px;box-sizing:border-box;background:#353535;border:1px solid #1e1e1e;border-radius:4px;"></div>
<div class="t" style="left:2344px;top:935.09px;font-size:13px;color:#d2d2d2;transform:scaleX(0.9846);transform-origin:0 0;">Delete</div>
<div style="position:absolute;left:2436px;top:919px;width:92px;height:21px;box-sizing:border-box;background:#353535;border:1px solid #1e1e1e;border-radius:4px;"></div>
<div class="t" style="left:2440px;top:923.09px;font-size:13px;color:#d2d2d2;transform:scaleX(0.9886);transform-origin:0 0;">Del Other</div>
<div style="position:absolute;left:2436px;top:943px;width:92px;height:21px;box-sizing:border-box;background:#353535;border:1px solid #1e1e1e;border-radius:4px;"></div>
<div class="t" style="left:2440px;top:947.09px;font-size:13px;color:#d2d2d2;transform:scaleX(0.9769);transform-origin:0 0;">Del All</div>
<div style="position:absolute;left:2335px;top:966px;width:199px;height:1px;background:#262626;"></div>
<div class="t" style="left:2344px;top:974.99px;font-size:13px;color:#c8c8c8;transform:scaleX(0.9490);transform-origin:0 0;">Split</div>
<div style="position:absolute;left:2335px;top:990px;width:199px;height:1px;background:#262626;"></div>
<div class="t" style="left:2344px;top:998.99px;font-size:13px;color:#c8c8c8;transform:scaleX(0.9498);transform-origin:0 0;">Merge</div>
<div style="position:absolute;left:2335px;top:1015px;width:199px;height:1px;background:#262626;"></div>
<div class="t" style="left:2344px;top:1023.99px;font-size:13px;color:#c8c8c8;transform:scaleX(0.9888);transform-origin:0 0;">Extract</div>
<div class="t" style="left:2348px;top:1053.99px;font-size:13px;color:#e0e0e0;transform:scaleX(0.9812);transform-origin:0 0;">Geometry</div>
<div class="t" style="left:2348px;top:1077.99px;font-size:13px;color:#e0e0e0;transform:scaleX(0.9516);transform-origin:0 0;">Preview</div>
<div class="t" style="left:2348px;top:1101.99px;font-size:13px;color:#e0e0e0;transform:scaleX(0.9374);transform-origin:0 0;">Surface</div>
<div class="t" style="left:2348px;top:1125.99px;font-size:13px;color:#e0e0e0;transform:scaleX(0.9886);transform-origin:0 0;">Deformation</div>
<div class="t" style="left:2348px;top:1149.99px;font-size:13px;color:#e0e0e0;transform:scaleX(0.9709);transform-origin:0 0;">Masking</div>
<div class="t" style="left:2348px;top:1173.99px;font-size:13px;color:#e0e0e0;transform:scaleX(0.9379);transform-origin:0 0;">Polygroups</div>
<div class="t" style="left:2348px;top:1197.99px;font-size:13px;color:#e0e0e0;transform:scaleX(0.9574);transform-origin:0 0;">Display Properties</div>
<div style="position:absolute;left:117.5px;top:1380px;width:92px;height:45px;box-sizing:border-box;background:#2c2c2c;border:1px solid #262626;border-radius:4px;"></div>
<div style="position:absolute;left:214px;top:1380px;width:92px;height:45px;box-sizing:border-box;background:#2c2c2c;border:1px solid #262626;border-radius:4px;"></div>
<div style="position:absolute;left:310px;top:1380px;width:92px;height:45px;box-sizing:border-box;background:#2c2c2c;border:1px solid #262626;border-radius:4px;"></div>
<div style="position:absolute;left:406px;top:1380px;width:92px;height:45px;box-sizing:border-box;background:#2c2c2c;border:1px solid #262626;border-radius:4px;"></div>
<div style="position:absolute;left:502px;top:1380px;width:92px;height:45px;box-sizing:border-box;background:#2c2c2c;border:1px solid #262626;border-radius:4px;"></div>
<div style="position:absolute;left:597.5px;top:1380px;width:92px;height:45px;box-sizing:border-box;background:#2c2c2c;border:1px solid #262626;border-radius:4px;"></div>
<div style="position:absolute;left:694px;top:1380px;width:92px;height:45px;box-sizing:border-box;background:#2c2c2c;border:1px solid #262626;border-radius:4px;"></div>
<div style="position:absolute;left:790px;top:1380px;width:92px;height:45px;box-sizing:border-box;background:#2c2c2c;border:1px solid #262626;border-radius:4px;"></div>
<div style="position:absolute;left:886px;top:1380px;width:92px;height:45px;box-sizing:border-box;background:#2c2c2c;border:1px solid #262626;border-radius:4px;"></div>
<div style="position:absolute;left:982px;top:1380px;width:92px;height:45px;box-sizing:border-box;background:#2c2c2c;border:1px solid #262626;border-radius:4px;"></div>
<div style="position:absolute;left:1077.5px;top:1380px;width:92px;height:45px;box-sizing:border-box;background:#353535;border:1px solid #111;border-radius:4px;"></div>
<div style="position:absolute;left:1078.5px;top:1381px;width:90px;height:26px;background:#3a3a38;border-radius:3px 3px 0 0;"></div>
<div style="position:absolute;left:1174px;top:1380px;width:92px;height:45px;box-sizing:border-box;background:#2c2c2c;border:1px solid #262626;border-radius:4px;"></div>
<div style="position:absolute;left:1270px;top:1380px;width:92px;height:45px;box-sizing:border-box;background:#2c2c2c;border:1px solid #262626;border-radius:4px;"></div>
<svg style="position:absolute;left:0;top:1370px" width="1400" height="70" viewBox="0 1370 1400 70">
<defs>
<radialGradient id="sA" cx="40%" cy="32%" r="75%"><stop offset="0" stop-color="#f2f2f2"/><stop offset="0.45" stop-color="#b4b4b4"/><stop offset="1" stop-color="#4a4a4a"/></radialGradient>
<radialGradient id="sB" cx="40%" cy="32%" r="75%"><stop offset="0" stop-color="#e8e8e8"/><stop offset="0.5" stop-color="#9c9c9c"/><stop offset="1" stop-color="#3a3a3a"/></radialGradient>
<radialGradient id="sC" cx="40%" cy="32%" r="75%"><stop offset="0" stop-color="#fafafa"/><stop offset="0.5" stop-color="#cfcfcf"/><stop offset="1" stop-color="#707070"/></radialGradient>
<radialGradient id="sD" cx="55%" cy="30%" r="75%"><stop offset="0" stop-color="#f0f0f0"/><stop offset="0.5" stop-color="#a8a8a8"/><stop offset="1" stop-color="#444"/></radialGradient>
</defs>
<!-- ClayBuildup -->
<circle cx="163.7" cy="1396.4" r="17.2" fill="url(#sC)"/>
<path d="M152,1408 Q166,1392 178,1388" stroke="#8a8a8a" stroke-width="1.2" fill="none"/>
<path d="M157,1384 Q162,1392 166,1400 M150,1392 Q160,1391 172,1386" stroke="#a0a0a0" stroke-width="0.9" fill="none"/>
<!-- Standard -->
<circle cx="259.4" cy="1395.4" r="17.6" fill="url(#sB)"/>
<path d="M256,1397 q4,2 6,-1 q1,-5 -5,-5 q-7,1 -6,8 q2,6 9,5 q8,-3 7,-11 q-3,-7 -10,-7" stroke="#dedede" stroke-width="2.4" fill="none"/>
<!-- DamStandard -->
<circle cx="356" cy="1396" r="18" fill="url(#sC)"/>
<path d="M342,1406 Q356,1392 370,1384 M346,1410 Q362,1398 373,1392 M352,1413 Q366,1404 374,1399" stroke="#9a9a9a" stroke-width="1" fill="none"/>
<!-- Move -->
<path d="M466,1381 Q470,1395 466,1404 Q458,1413 446,1412 Q435,1409 436,1398 Q438,1388 450,1385 Z" fill="url(#sD)"/>
<path d="M448,1392 L455,1388" stroke="#fafafa" stroke-width="1.2"/>
<!-- TrimDynamic -->
<circle cx="548" cy="1396" r="17.5" fill="url(#sC)"/>
<circle cx="549" cy="1396" r="11" fill="#d6d6d6"/>
<!-- hPolish -->
<path d="M648,1381 Q662,1395 658,1406 Q650,1414 640,1412 Q627,1408 628,1396 Q630,1382 648,1381 Z" fill="url(#sB)"/>
<path d="M648,1381 Q662,1395 658,1406 Q646,1398 648,1381 Z" fill="#9a9a9a"/>
<!-- Pinch -->
<circle cx="739.4" cy="1395.4" r="17" fill="url(#sB)"/>
<path d="M726,1402 Q736,1392 742,1398 Q748,1402 752,1390" stroke="#f6f6f6" stroke-width="2.6" fill="none"/>
<path d="M738,1388 Q746,1385 750,1390" stroke="#f6f6f6" stroke-width="2" fill="none"/>
<!-- Inflate -->
<circle cx="832" cy="1399" r="15" fill="url(#sB)"/>
<circle cx="843" cy="1388.5" r="9" fill="url(#sA)"/>
<!-- IMM -->
<polygon points="916,1391 923,1386 932,1389 932,1395 925,1399 916,1396" fill="#d4d4d4"/>
<polygon points="916,1391 923,1386 932,1389 925,1393" fill="#eee"/>
<rect x="935" y="1386" width="12" height="10" rx="5" transform="rotate(-35 941 1391)" fill="#d8d8d8"/>
<circle cx="933.5" cy="1403" r="6" fill="url(#sC)"/>
<!-- Paint -->
<circle cx="1027.5" cy="1395.4" r="18" fill="url(#sC)"/>
<path d="M1028,1396 q2,-3 -1,-4 q-4,0 -4,4 q1,5 6,4 q6,-2 5,-8 q-3,-6 -10,-4" stroke="#2a2a2a" stroke-width="2.4" fill="none"/>
<!-- Transpose -->
<g fill="none" stroke="#bbb" stroke-width="0.9" stroke-dasharray="3,2">
<circle cx="1117" cy="1391" r="10"/>
</g>
<circle cx="1117" cy="1391" r="5" fill="none" stroke="#f0f0f0" stroke-width="2"/>
<circle cx="1117" cy="1391" r="1.5" fill="#999"/>
<path d="M1121,1395 L1131,1405" stroke="#aaa" stroke-width="1"/>
<circle cx="1134.5" cy="1408.5" r="4.8" fill="none" stroke="#f0f0f0" stroke-width="2"/>
<circle cx="1134.5" cy="1408.5" r="1.4" fill="#999"/>
<!-- SelectLasso -->
<path d="M1210,1407 Q1205,1400 1207,1392 Q1209,1385 1214,1387 Q1220,1390 1226,1386 Q1232,1382 1232,1390 Q1232,1397 1226,1398 Q1221,1400 1220,1405 Q1216,1412 1210,1407 Z" fill="none" stroke="#cfcfcf" stroke-width="1.3" stroke-dasharray="2,1.3"/>
<!-- SelectRect -->
<rect x="1303.5" y="1383.5" width="24.5" height="24.5" fill="none" stroke="#cfcfcf" stroke-width="1.4" stroke-dasharray="2,1.4"/>
<text x="971" y="1394.5" font-family="Liberation Sans" font-size="11" fill="#cccccc">3</text>
<polygon points="1168,1437 1174,1431 1180,1437" fill="#888"/>
<polygon points="1178,1431 1189,1431 1183.5,1437" fill="#888"/>
</svg>
<div class="t" style="left:130.5px;top:1409.99px;font-size:13px;color:#d0d0d0;transform:scaleX(0.9513);transform-origin:0 0;">ClayBuildup</div>
<div class="t" style="left:234.5px;top:1409.99px;font-size:13px;color:#d0d0d0;transform:scaleX(0.9666);transform-origin:0 0;">Standard</div>
<div class="t" style="left:317.0px;top:1409.99px;font-size:13px;color:#d0d0d0;transform:scaleX(0.9724);transform-origin:0 0;">DamStandard</div>
<div class="t" style="left:436.0px;top:1409.99px;font-size:13px;color:#d0d0d0;transform:scaleX(1.0066);transform-origin:0 0;">Move</div>
<div class="t" style="left:510.5px;top:1409.99px;font-size:13px;color:#d0d0d0;transform:scaleX(0.9859);transform-origin:0 0;">TrimDynamic</div>
<div class="t" style="left:623.5px;top:1409.99px;font-size:13px;color:#d0d0d0;transform:scaleX(0.9381);transform-origin:0 0;">hPolish</div>
<div class="t" style="left:725.0px;top:1409.99px;font-size:13px;color:#d0d0d0;transform:scaleX(0.9225);transform-origin:0 0;">Pinch</div>
<div class="t" style="left:818.0px;top:1409.99px;font-size:13px;color:#d0d0d0;transform:scaleX(1.0166);transform-origin:0 0;">Inflate</div>
<div class="t" style="left:889.5px;top:1409.99px;font-size:13px;color:#d0d0d0;transform:scaleX(0.9974);transform-origin:0 0;">IMM Primitives</div>
<div class="t" style="left:1014.0px;top:1409.99px;font-size:13px;color:#d0d0d0;transform:scaleX(0.9449);transform-origin:0 0;">Paint</div>
<div class="t" style="left:1094.0px;top:1409.99px;font-size:13px;color:#d0d0d0;transform:scaleX(0.9682);transform-origin:0 0;">Transpose</div>
<div class="t" style="left:1187.0px;top:1409.99px;font-size:13px;color:#d0d0d0;transform:scaleX(0.9319);transform-origin:0 0;">SelectLasso</div>
<div class="t" style="left:1287.0px;top:1409.99px;font-size:13px;color:#d0d0d0;transform:scaleX(0.9227);transform-origin:0 0;">SelectRect</div>
<div style="position:absolute;left:1115px;top:1431px;width:50px;height:6px;background:repeating-linear-gradient(45deg,#555 0 1px,#2a2a2a 1px 2px);"></div>
<div style="position:absolute;left:1192px;top:1431px;width:51px;height:6px;background:repeating-linear-gradient(45deg,#555 0 1px,#2a2a2a 1px 2px);"></div>
</body></html>
